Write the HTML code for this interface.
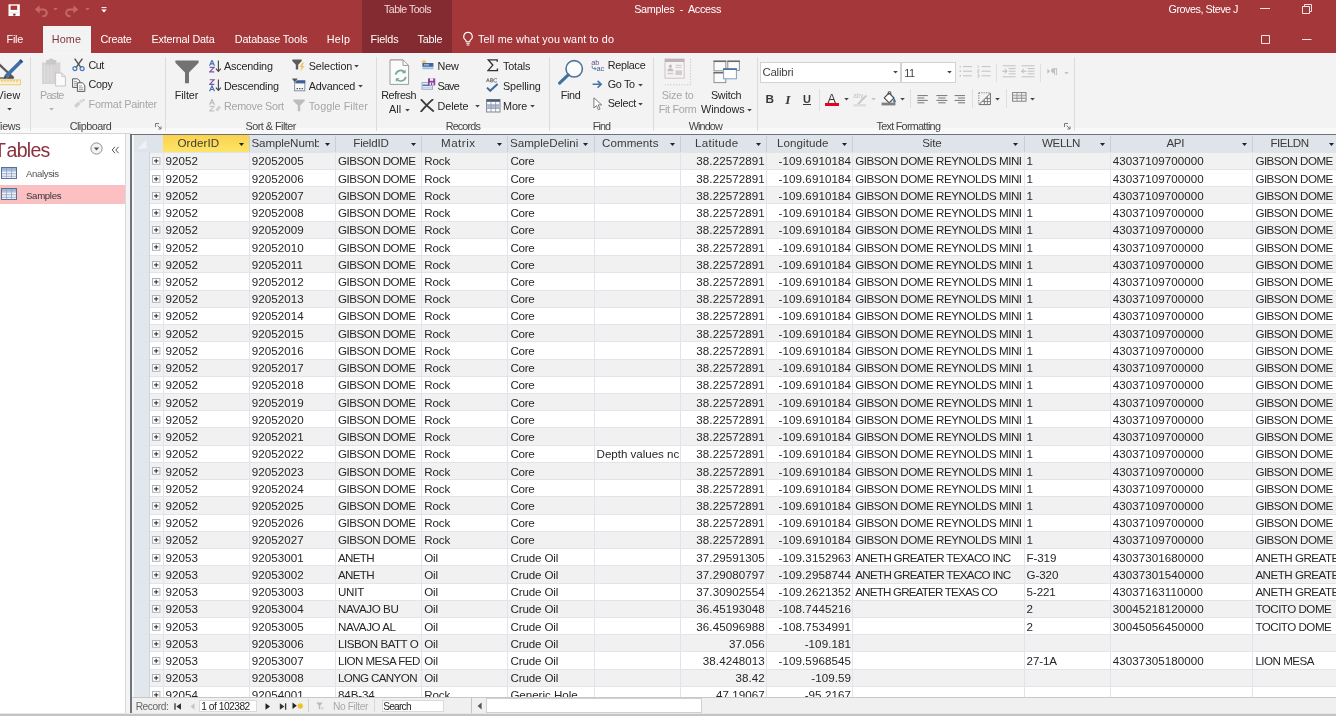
<!DOCTYPE html>
<html lang="en"><head><meta charset="utf-8"><title>Samples - Access</title>
<style>
html,body{margin:0;padding:0;}
body{width:1336px;height:716px;overflow:hidden;position:relative;background:#fff;font-family:"Liberation Sans", sans-serif;}
#app{position:absolute;left:0;top:0;width:1336px;height:716px;overflow:hidden;will-change:transform;-webkit-font-smoothing:antialiased;}
#app div,#app span,#app svg{position:absolute;display:block;}
#app span{white-space:pre;}
</style></head><body><div id="app">
<div style="left:0px;top:0px;width:1336px;height:52.7px;background:#a4373a;"></div>
<div style="left:362px;top:0px;width:90px;height:52.7px;background:#832b30;"></div>
<div style="left:0px;top:52.7px;width:1336px;height:81.3px;background:#f3f3f3;"></div>
<div style="left:42.8px;top:25.9px;width:48.1px;height:28px;background:#f3f3f3;"></div>
<div style="left:0px;top:52.7px;width:1336px;height:0.9px;background:#fbf4f4;"></div>
<div style="left:0px;top:128.4px;width:1336px;height:5.2px;background:#f9f9f9;"></div>
<span style="left:384.00px;top:3.70px;font-size:10.6px;line-height:10.6px;color:#f0d6d7;letter-spacing:-0.519px;">Table Tools</span>
<span style="left:634.20px;top:3.60px;font-size:10.8px;line-height:10.8px;color:#ffffff;letter-spacing:-0.273px;">Samples  -  Access</span>
<span style="left:1168.60px;top:3.60px;font-size:10.8px;line-height:10.8px;color:#ffffff;letter-spacing:-0.494px;">Groves, Steve J</span>
<span style="left:6.60px;top:33.60px;font-size:10.8px;line-height:10.8px;color:#ffffff;letter-spacing:-0.252px;">File</span>
<span style="left:51.80px;top:33.60px;font-size:10.8px;line-height:10.8px;color:#84373d;letter-spacing:0.097px;">Home</span>
<span style="left:100.50px;top:33.60px;font-size:10.8px;line-height:10.8px;color:#ffffff;letter-spacing:-0.254px;">Create</span>
<span style="left:151.40px;top:33.60px;font-size:10.8px;line-height:10.8px;color:#ffffff;letter-spacing:-0.179px;">External Data</span>
<span style="left:234.70px;top:33.60px;font-size:10.8px;line-height:10.8px;color:#ffffff;letter-spacing:-0.102px;">Database Tools</span>
<span style="left:326.70px;top:33.60px;font-size:10.8px;line-height:10.8px;color:#ffffff;letter-spacing:0.345px;">Help</span>
<span style="left:370.50px;top:33.60px;font-size:10.8px;line-height:10.8px;color:#ffffff;letter-spacing:-0.152px;">Fields</span>
<span style="left:417.60px;top:33.60px;font-size:10.8px;line-height:10.8px;color:#ffffff;letter-spacing:-0.243px;">Table</span>
<span style="left:478.00px;top:33.60px;font-size:10.8px;line-height:10.8px;color:#ffffff;letter-spacing:0.102px;">Tell me what you want to do</span>
<svg style="left:461px;top:31px;" width="14" height="16" viewBox="0 0 14 16"><path d="M7 1.2a4.3 4.3 0 0 0-2.6 7.7c.5.5.8 1 .8 1.8h3.6c0-.8.3-1.3.8-1.8A4.3 4.3 0 0 0 7 1.2z" fill="none" stroke="#fff" stroke-width="1.1"/><path d="M5.3 12.3h3.4M5.6 14h2.8" stroke="#fff" stroke-width="1.1"/></svg>
<svg style="left:8px;top:4px;" width="13" height="13" viewBox="0 0 13 13"><rect x=".5" y=".3" width="11.3" height="11.7" fill="#fff"/><rect x="2.6" y="1.7" width="6.6" height="4.2" fill="#a4373a"/><rect x="5.2" y="9.6" width="2.3" height="2" fill="#7a2a2d"/><rect x="2.2" y="8.6" width="8" height=".8" fill="#e9cfd0"/></svg>
<svg style="left:34px;top:4px;" width="16" height="13" viewBox="0 0 16 13"><path d="M3 5.4h6.4a3.4 3.4 0 0 1 0 6.8H8.4" fill="none" stroke="#c4666a" stroke-width="2"/><path d="M5.6 1.2v8.4L.8 5.4z" fill="#c4666a"/></svg>
<svg style="left:53px;top:7.6px;" width="5" height="3" viewBox="0 0 5 3"><path d="M.2 0h4.6L2.5 2.4z" fill="#c4666a"/></svg>
<svg style="left:65.4px;top:4px;" width="16" height="13" viewBox="0 0 16 13"><path d="M11 5.4H4.6a3.4 3.4 0 0 0 0 6.8h1" fill="none" stroke="#c4666a" stroke-width="2"/><path d="M8.4 1.2v8.4l4.8-4.2z" fill="#c4666a"/></svg>
<svg style="left:84.8px;top:7.6px;" width="5" height="3" viewBox="0 0 5 3"><path d="M.2 0h4.6L2.5 2.4z" fill="#c4666a"/></svg>
<svg style="left:100.5px;top:6.5px;" width="6" height="6" viewBox="0 0 6 6"><path d="M.5.6h5" stroke="#fff" stroke-width="1"/><path d="M.3 2.6h5.4L3 5.6z" fill="#fff"/></svg>
<svg style="left:1259px;top:4px;" width="12" height="10" viewBox="0 0 12 10"><path d="M1 4.5h10" stroke="#f6e4e4" stroke-width="1"/></svg>
<svg style="left:1301px;top:3px;" width="12" height="12" viewBox="0 0 12 12"><path d="M1.5 3.5h7v7h-7z" fill="none" stroke="#f6e4e4" stroke-width="1"/><path d="M3.5 3.5v-2h7v7h-2" fill="none" stroke="#f6e4e4" stroke-width="1"/></svg>
<svg style="left:1260px;top:34px;" width="12" height="12" viewBox="0 0 12 12"><path d="M1.5 1.5h8v8h-8z" fill="none" stroke="#f6e4e4" stroke-width="1"/></svg>
<svg style="left:1301px;top:34px;" width="12" height="10" viewBox="0 0 12 10"><path d="M1 5.5h9.5" stroke="#f6e4e4" stroke-width="1"/></svg>
<div style="left:29.7px;top:57px;width:1px;height:74px;background:#dcdcdc;"></div>
<div style="left:165.1px;top:57px;width:1px;height:74px;background:#dcdcdc;"></div>
<div style="left:376.0px;top:57px;width:1px;height:74px;background:#dcdcdc;"></div>
<div style="left:549.0px;top:57px;width:1px;height:74px;background:#dcdcdc;"></div>
<div style="left:653.1px;top:57px;width:1px;height:74px;background:#dcdcdc;"></div>
<div style="left:757.0px;top:57px;width:1px;height:74px;background:#dcdcdc;"></div>
<div style="left:1073.6px;top:57px;width:1px;height:74px;background:#dcdcdc;"></div>
<span style="left:-6.60px;top:120.60px;font-size:10.8px;line-height:10.8px;color:#444444;letter-spacing:-0.322px;">Views</span>
<span style="left:69.70px;top:120.60px;font-size:10.8px;line-height:10.8px;color:#444444;letter-spacing:-0.524px;">Clipboard</span>
<span style="left:245.60px;top:120.60px;font-size:10.8px;line-height:10.8px;color:#444444;letter-spacing:-0.523px;">Sort &amp; Filter</span>
<span style="left:445.70px;top:120.60px;font-size:10.8px;line-height:10.8px;color:#444444;letter-spacing:-0.846px;">Records</span>
<span style="left:592.80px;top:120.60px;font-size:10.8px;line-height:10.8px;color:#444444;letter-spacing:-0.929px;">Find</span>
<span style="left:688.70px;top:120.60px;font-size:10.8px;line-height:10.8px;color:#444444;letter-spacing:-0.868px;">Window</span>
<span style="left:876.50px;top:120.60px;font-size:10.8px;line-height:10.8px;color:#444444;letter-spacing:-0.714px;">Text Formatting</span>
<span style="left:-3.40px;top:89.60px;font-size:10.8px;line-height:10.8px;color:#262626;letter-spacing:0.145px;">View</span>
<span style="left:40.00px;top:89.60px;font-size:10.8px;line-height:10.8px;color:#a6a6a6;letter-spacing:-0.822px;">Paste</span>
<span style="left:174.80px;top:89.60px;font-size:10.8px;line-height:10.8px;color:#262626;letter-spacing:-0.100px;">Filter</span>
<span style="left:381.20px;top:89.60px;font-size:10.8px;line-height:10.8px;color:#262626;letter-spacing:-0.416px;">Refresh</span>
<span style="left:388.90px;top:103.60px;font-size:10.8px;line-height:10.8px;color:#262626;letter-spacing:0.133px;">All</span>
<span style="left:560.70px;top:89.60px;font-size:10.8px;line-height:10.8px;color:#262626;letter-spacing:-0.329px;">Find</span>
<span style="left:661.80px;top:89.60px;font-size:10.8px;line-height:10.8px;color:#a6a6a6;letter-spacing:-0.174px;">Size to</span>
<span style="left:658.70px;top:103.60px;font-size:10.8px;line-height:10.8px;color:#a6a6a6;letter-spacing:-0.286px;">Fit Form</span>
<span style="left:710.90px;top:89.60px;font-size:10.8px;line-height:10.8px;color:#262626;letter-spacing:-0.219px;">Switch</span>
<span style="left:701.00px;top:103.60px;font-size:10.8px;line-height:10.8px;color:#262626;letter-spacing:-0.016px;">Windows</span>
<span style="left:88.60px;top:59.60px;font-size:10.8px;line-height:10.8px;color:#262626;letter-spacing:-0.571px;">Cut</span>
<span style="left:88.60px;top:78.60px;font-size:10.8px;line-height:10.8px;color:#262626;letter-spacing:-0.330px;">Copy</span>
<span style="left:88.60px;top:98.60px;font-size:10.8px;line-height:10.8px;color:#a6a6a6;letter-spacing:-0.229px;">Format Painter</span>
<span style="left:223.90px;top:60.60px;font-size:10.8px;line-height:10.8px;color:#262626;letter-spacing:-0.169px;">Ascending</span>
<span style="left:223.90px;top:80.60px;font-size:10.8px;line-height:10.8px;color:#262626;letter-spacing:-0.203px;">Descending</span>
<span style="left:223.90px;top:100.60px;font-size:10.8px;line-height:10.8px;color:#a6a6a6;letter-spacing:-0.283px;">Remove Sort</span>
<span style="left:308.70px;top:60.60px;font-size:10.8px;line-height:10.8px;color:#262626;letter-spacing:-0.102px;">Selection</span>
<span style="left:308.70px;top:80.60px;font-size:10.8px;line-height:10.8px;color:#262626;letter-spacing:-0.204px;">Advanced</span>
<span style="left:308.70px;top:100.60px;font-size:10.8px;line-height:10.8px;color:#a6a6a6;letter-spacing:0.022px;">Toggle Filter</span>
<span style="left:437.50px;top:60.60px;font-size:10.8px;line-height:10.8px;color:#262626;letter-spacing:-0.170px;">New</span>
<span style="left:437.50px;top:80.60px;font-size:10.8px;line-height:10.8px;color:#262626;letter-spacing:-0.802px;">Save</span>
<span style="left:437.50px;top:100.60px;font-size:10.8px;line-height:10.8px;color:#262626;letter-spacing:-0.036px;">Delete</span>
<span style="left:503.00px;top:60.60px;font-size:10.8px;line-height:10.8px;color:#262626;letter-spacing:-0.170px;">Totals</span>
<span style="left:503.00px;top:80.60px;font-size:10.8px;line-height:10.8px;color:#262626;letter-spacing:-0.078px;">Spelling</span>
<span style="left:503.00px;top:100.60px;font-size:10.8px;line-height:10.8px;color:#262626;letter-spacing:-0.077px;">More</span>
<span style="left:607.70px;top:59.60px;font-size:10.8px;line-height:10.8px;color:#262626;letter-spacing:-0.275px;">Replace</span>
<span style="left:607.70px;top:78.60px;font-size:10.8px;line-height:10.8px;color:#262626;letter-spacing:-0.305px;">Go To</span>
<span style="left:607.70px;top:97.60px;font-size:10.8px;line-height:10.8px;color:#262626;letter-spacing:-0.286px;">Select</span>
<svg style="left:6.9px;top:108.0px;" width="5" height="3" viewBox="0 0 5 3"><path d="M.2 0h4.6L2.5 2.5z" fill="#444"/></svg>
<svg style="left:49.3px;top:108.0px;" width="5" height="3" viewBox="0 0 5 3"><path d="M.2 0h4.6L2.5 2.5z" fill="#b0b0b0"/></svg>
<svg style="left:354.3px;top:65.2px;" width="5" height="3" viewBox="0 0 5 3"><path d="M.2 0h4.6L2.5 2.5z" fill="#444"/></svg>
<svg style="left:358.1px;top:84.7px;" width="5" height="3" viewBox="0 0 5 3"><path d="M.2 0h4.6L2.5 2.5z" fill="#444"/></svg>
<svg style="left:404.5px;top:108.5px;" width="5" height="3" viewBox="0 0 5 3"><path d="M.2 0h4.6L2.5 2.5z" fill="#444"/></svg>
<svg style="left:475.4px;top:104.7px;" width="5" height="3" viewBox="0 0 5 3"><path d="M.2 0h4.6L2.5 2.5z" fill="#444"/></svg>
<svg style="left:529.7px;top:104.7px;" width="5" height="3" viewBox="0 0 5 3"><path d="M.2 0h4.6L2.5 2.5z" fill="#444"/></svg>
<svg style="left:638.1px;top:83.7px;" width="5" height="3" viewBox="0 0 5 3"><path d="M.2 0h4.6L2.5 2.5z" fill="#444"/></svg>
<svg style="left:638.4px;top:102.7px;" width="5" height="3" viewBox="0 0 5 3"><path d="M.2 0h4.6L2.5 2.5z" fill="#444"/></svg>
<svg style="left:747.1px;top:108.5px;" width="5" height="3" viewBox="0 0 5 3"><path d="M.2 0h4.6L2.5 2.5z" fill="#444"/></svg>
<div style="left:760px;top:62px;width:140.5px;height:20.5px;background:#fff;border:1px solid #d2d2d2;box-sizing:border-box;"></div>
<div style="left:901px;top:62px;width:55px;height:20.5px;background:#fff;border:1px solid #d2d2d2;box-sizing:border-box;"></div>
<span style="left:762.40px;top:67.25px;font-size:11.5px;line-height:11.5px;color:#444;letter-spacing:-0.242px;">Calibri</span>
<span style="left:904.20px;top:67.50px;font-size:11px;line-height:11px;color:#444;letter-spacing:-0.511px;">11</span>
<svg style="left:892.8px;top:71.3px;" width="5" height="3" viewBox="0 0 5 3"><path d="M.2 0h4.6L2.5 2.5z" fill="#444"/></svg>
<svg style="left:947.1px;top:71.3px;" width="5" height="3" viewBox="0 0 5 3"><path d="M.2 0h4.6L2.5 2.5z" fill="#444"/></svg>
<svg style="left:-4px;top:58px;" width="28" height="28" viewBox="0 0 28 28"><path d="M1.4 4.6L17.6 20" fill="none" stroke="#5a5a5a" stroke-width="2.3"/><path d="M13.4 17.2l4.6 3.4h-7z" fill="#4a4a4a"/><path d="M3.4 20h14" stroke="#5a5a5a" stroke-width="1.4"/><path d="M10.2 18L24.6 3.8" stroke="#3f6fa8" stroke-width="3.7"/><path d="M24.4 4L26 2.4" stroke="#2b4a73" stroke-width="3.7"/><path d="M8.9 16.7l2.6 2.6-4 1.6z" fill="#444"/><rect x="0" y="21.9" width="24.4" height="4.8" fill="#fdf3d3" stroke="#ecca75" stroke-width="1"/><path d="M3 22v2.4M6 22v2.4M9 22v2.4M12 22v2.4M15 22v2.4M18 22v2.4M21 22v2.4" stroke="#dcb75a" stroke-width=".9"/></svg>
<svg style="left:41px;top:58px;" width="26" height="30" viewBox="0 0 26 30"><rect x="1" y="4.4" width="18.4" height="21.6" fill="#d6d4d5"/><rect x="5.2" y="2" width="10" height="4.4" fill="#c9c7c8"/><rect x="8.2" y=".6" width="4" height="3" fill="#c9c7c8"/><path d="M3.5 8v16M7 8v16M10.5 8v16" stroke="#dedcdd" stroke-width="1.2"/><path d="M14.6 15h6.2l3.6 3.6v9.4h-9.8z" fill="#fbfbfb" stroke="#c6c6c6" stroke-width="1"/><path d="M20.8 15v3.6h3.6" fill="none" stroke="#c6c6c6" stroke-width="1"/></svg>
<svg style="left:72px;top:58px;" width="13" height="14" viewBox="0 0 13 14"><path d="M2.6.6l6.6 9.2M10.4.6L3.8 9.8" stroke="#505050" stroke-width="1.4" fill="none"/><circle cx="2.9" cy="10.6" r="2" fill="none" stroke="#4a7ab5" stroke-width="1.2"/><circle cx="10.1" cy="10.6" r="2" fill="none" stroke="#4a7ab5" stroke-width="1.2"/></svg>
<svg style="left:72px;top:77.5px;" width="14" height="14" viewBox="0 0 14 14"><path d="M.6.8h5l2.2 2.2v6.4H.6z" fill="#fafafa" stroke="#5a5a5a" stroke-width="1"/><path d="M2 3.6h3M2 5.4h4M2 7.2h4" stroke="#8a8a8a" stroke-width=".8"/><path d="M5.4 4.8h5l2.4 2.4v6.2H5.4z" fill="#fafafa" stroke="#5a5a5a" stroke-width="1"/><path d="M7 8h3M7 9.8h4.2M7 11.6h4.2" stroke="#8a8a8a" stroke-width=".8"/></svg>
<svg style="left:73px;top:97.5px;" width="13" height="11" viewBox="0 0 13 11"><path d="M1 7.6l4.2-4.2 2.4 2.4-4.2 4.2z" fill="#cfcfcf"/><path d="M6 2.8l1.6-1.6 2.4 2.4-1.6 1.6z" fill="#d8d8d8"/><circle cx="10.6" cy="2" r="1.2" fill="#cfcfcf"/></svg>
<svg style="left:155px;top:123px;" width="7" height="7" viewBox="0 0 7 7"><path d="M.5 4V.5H4" fill="none" stroke="#777" stroke-width="1"/><path d="M2.6 2.6l3.2 3.2M6 3.4V6H3.4" fill="none" stroke="#777" stroke-width="1"/></svg>
<svg style="left:1064px;top:123px;" width="7" height="7" viewBox="0 0 7 7"><path d="M.5 4V.5H4" fill="none" stroke="#777" stroke-width="1"/><path d="M2.6 2.6l3.2 3.2M6 3.4V6H3.4" fill="none" stroke="#777" stroke-width="1"/></svg>
<svg style="left:175px;top:59.6px;" width="24" height="24" viewBox="0 0 24 24"><path d="M.4.6h23.2v2.2L14 12.6v10.6h-4V12.6L.4 2.8z" fill="#727272"/></svg>
<svg style="left:208.6px;top:59.6px;" width="13" height="13" viewBox="0 0 13 13"><path d="M.5 5.7L3 0.3l2.5 5.4M1.4 3.9h3.2" fill="none" stroke="#4572b0" stroke-width="1.15"/><path d="M.7 7.300000000000001h4.4L.7 11.9h4.6" fill="none" stroke="#7c57a6" stroke-width="1.15"/><path d="M9.4.4v11M6.9 8.6l2.5 2.8 2.5-2.8" fill="none" stroke="#444" stroke-width="1.1"/></svg>
<svg style="left:208.6px;top:79.4px;" width="13" height="13" viewBox="0 0 13 13"><path d="M.7 0.7h4.4L.7 5.3h4.6" fill="none" stroke="#7c57a6" stroke-width="1.15"/><path d="M.5 12.3L3 6.9l2.5 5.4M1.4 10.5h3.2" fill="none" stroke="#4572b0" stroke-width="1.15"/><path d="M9.4.4v11M6.9 8.6l2.5 2.8 2.5-2.8" fill="none" stroke="#444" stroke-width="1.1"/></svg>
<svg style="left:208.6px;top:99.2px;" width="13" height="13" viewBox="0 0 13 13"><path d="M.5 5.7L3 0.3l2.5 5.4M1.4 3.9h3.2" fill="none" stroke="#bdbdbd" stroke-width="1.15"/><path d="M.7 7.300000000000001h4.4L.7 11.9h4.6" fill="none" stroke="#c4c4c4" stroke-width="1.15"/><path d="M6.4 10.6l3.6-4 2 1.8-3.6 4z" fill="#cfcfcf"/></svg>
<svg style="left:292px;top:58.8px;" width="14" height="13" viewBox="0 0 14 13"><path d="M.3.5h9.4v1.4L6.2 5.8v4.8H3.8V5.8L.3 1.9z" fill="#5c5c5c"/><path d="M10.4 3.6L7.6 8h2l-1.4 4.4L12.6 7h-2.2l1.6-3.4z" fill="#f5c25c"/></svg>
<svg style="left:292px;top:78.4px;" width="14" height="14" viewBox="0 0 14 14"><rect x="2.6" y="2.8" width="10.2" height="10" fill="#f6f8fb" stroke="#8593a8" stroke-width="1"/><rect x="2.2" y="2.4" width="11" height="3" fill="#3d6094"/><path d="M.1.2h5.4v1L3.6 3.4v2.4H2V3.4L.1 1.2z" fill="#555" stroke="#f3f3f3" stroke-width=".5"/><path d="M4.6 10.7h1.3M7.1 10.7h1.3M9.6 10.7h1.3" stroke="#444" stroke-width="1.3"/></svg>
<svg style="left:293px;top:99px;" width="13" height="13" viewBox="0 0 13 13"><path d="M.3.5h11.4v1.6L7.2 6.6v5.6H4.8V6.6L.3 2.1z" fill="#bdbdbd"/></svg>
<svg style="left:388.8px;top:59.2px;" width="22" height="27" viewBox="0 0 22 27"><path d="M1 .8h13l5.6 5.6v19H1z" fill="#fbfbfb" stroke="#9c9c9c" stroke-width="1"/><path d="M1 .8h13" stroke="#c3a3ad" stroke-width="1.2"/><path d="M14 .8v5.6h5.6" fill="none" stroke="#9c9c9c" stroke-width="1"/><path d="M6.6 15.6a5.2 5.2 0 0 1 9-2.4" fill="none" stroke="#74a88f" stroke-width="1.7"/><path d="M16.6 10.4v3.8h-3.8z" fill="#74a88f"/><path d="M16.8 17.8a5.2 5.2 0 0 1-9 2.4" fill="none" stroke="#74a88f" stroke-width="1.7"/><path d="M6.8 23v-3.8h3.8z" fill="#74a88f"/></svg>
<svg style="left:420.8px;top:58.6px;" width="13" height="11" viewBox="0 0 13 11"><path d="M3 .2l.9 1.9 2 .3-1.5 1.4.4 2L3 4.8l-1.8 1 .4-2L.1 2.4l2-.3z" fill="#f3c15f"/><rect x="1.4" y="4" width="11" height="3.8" fill="#3b69a3"/><rect x="1.4" y="8.4" width="11" height="1.8" fill="#9db9df"/><path d="M3 5.9h5" stroke="#dfe9f6" stroke-width=".9"/></svg>
<svg style="left:420.8px;top:77.8px;" width="15" height="12" viewBox="0 0 15 12"><rect x="1" y="4.6" width="10.6" height="6.6" fill="#e8eef7" stroke="#8ea3c4" stroke-width=".9"/><path d="M1.6 7.2h9.4" stroke="#345c94" stroke-width="1.2"/><path d="M1.6 9.4h9.4" stroke="#b7c8e2" stroke-width=".9"/><rect x="7" y=".4" width="7.2" height="7" fill="#8a3f9e"/><rect x="9" y=".4" width="3.2" height="2.4" fill="#f3f3f3"/><rect x="8.6" y="4.6" width="4" height="2.8" fill="#f3f3f3"/><rect x="10" y="5" width="1.2" height="2" fill="#8a3f9e"/></svg>
<svg style="left:420px;top:99.2px;" width="15" height="13" viewBox="0 0 15 13"><path d="M1.4.8c3 3.4 7 7.4 11.8 11.2M12.6.6C8.8 3.8 4.8 8.2 1.2 12.4" fill="none" stroke="#3b3b3b" stroke-width="1.8" stroke-linecap="round"/></svg>
<svg style="left:487.4px;top:59px;" width="12" height="13" viewBox="0 0 12 13"><path d="M10.2 2.8V.8H1.2l4.6 5.3-4.8 5.5h9.4V9.4" fill="none" stroke="#333" stroke-width="1.35" stroke-linejoin="miter"/></svg>
<svg style="left:486.4px;top:78px;" width="13" height="14" viewBox="0 0 13 14"><path d="M.4 4L1.9.5 3.4 4M1 2.8h1.8" fill="none" stroke="#666" stroke-width=".8"/><path d="M4.6.5v3.5h1.5a.9.9 0 0 0 0-1.8H4.6M6 2.2a.85.85 0 0 0 0-1.7H4.6" fill="none" stroke="#666" stroke-width=".8"/><path d="M11 1.1a1.9 1.9 0 1 0 0 2.4" fill="none" stroke="#666" stroke-width=".8"/><path d="M1 9.6l3.2 3.2 7.4-6.8" fill="none" stroke="#3d69a2" stroke-width="2"/></svg>
<svg style="left:485.6px;top:98.8px;" width="15" height="14" viewBox="0 0 15 14"><rect x=".6" y=".6" width="13.4" height="12.4" fill="#fbfbfb" stroke="#7d8794" stroke-width="1"/><rect x=".6" y=".4" width="13.4" height="2.4" fill="#4c5b70"/><rect x="1.2" y="6" width="12.2" height="3.2" fill="#aebfdb"/><path d="M1 5.8h12.6M1 9.4h12.6M5 3v10M9.6 3v10" stroke="#8b95a3" stroke-width=".8"/></svg>
<svg style="left:557px;top:58.6px;" width="28" height="27" viewBox="0 0 28 27"><circle cx="17.2" cy="9.8" r="8.2" fill="#fcfcfc" stroke="#4f759d" stroke-width="1.6"/><path d="M11.2 15.8L2.6 24.2" stroke="#41719c" stroke-width="3.1" stroke-linecap="round"/></svg>
<svg style="left:591px;top:59.4px;" width="15" height="13" viewBox="0 0 15 13"><text x=".2" y="5.6" font-family="Liberation Sans, sans-serif" font-size="7.4" fill="#6b4a8c">ab</text><text x="5.4" y="12.2" font-family="Liberation Sans, sans-serif" font-size="7.4" fill="#4a5f94">ac</text><path d="M1.2 6.8v1.6a1.2 1.2 0 0 0 1.2 1.2h2.4M3.6 8.2l1.4 1.4-1.4 1.4" fill="none" stroke="#4574a8" stroke-width=".9"/></svg>
<svg style="left:592.4px;top:79.8px;" width="11" height="9" viewBox="0 0 11 9"><path d="M.6 4.3h8.4M5.6.9l3.6 3.4-3.6 3.4" fill="none" stroke="#4574a8" stroke-width="1.6"/></svg>
<svg style="left:593.2px;top:96.6px;" width="11" height="14" viewBox="0 0 11 14"><path d="M.9.8v10.2l2.6-2.4 1.9 4.2 1.7-.8-1.9-4.1h3.5z" fill="#fdfdfd" stroke="#6f6f6f" stroke-width=".9" stroke-linejoin="round"/></svg>
<svg style="left:664px;top:58px;" width="28" height="28" viewBox="0 0 28 28"><path d="M26.6 1v25.8H1" fill="none" stroke="#c9c3c7" stroke-width="1" stroke-dasharray="1.2 1.6"/><rect x="1" y="1" width="19.2" height="19.2" fill="#f4f2f3" stroke="#cbc4c8" stroke-width="1"/><rect x="1" y="1" width="19.2" height="3" fill="#bcb1b7"/><circle cx="6.4" cy="8.2" r="1.6" fill="#c5bcc1"/><path d="M3.4 13.2a3 3 0 0 1 6 0z" fill="#c5bcc1"/><path d="M11.6 7.4h6M11.6 9.4h6" stroke="#d7d1d4" stroke-width="1.1"/><rect x="11.4" y="12.4" width="6.6" height="4.6" fill="#d2cbcf"/><path d="M3.4 15.6h6" stroke="#d2cbcf" stroke-width="1.6"/></svg>
<svg style="left:712.6px;top:59.6px;" width="28" height="24" viewBox="0 0 28 24"><rect x="1" y="1.2" width="11.8" height="9.6" fill="#fbfbfb" stroke="#909090" stroke-width="1"/><path d="M.5 1.3h12.8" stroke="#6a6a6a" stroke-width="1.5"/><rect x="14.8" y="1.2" width="11.6" height="9.2" fill="#fbfbfb" stroke="#909090" stroke-width="1"/><path d="M14.3 1.3h12.6" stroke="#6a6a6a" stroke-width="1.5"/><rect x="1" y="12.6" width="11.8" height="10" fill="#fbfbfb" stroke="#909090" stroke-width="1"/><path d="M.5 12.7h12.8" stroke="#6a6a6a" stroke-width="1.5"/><rect x="10.6" y="9" width="12.8" height="9.8" fill="#ffffff" stroke="#7f9fc4" stroke-width="1"/><path d="M10.1 9.1h13.8" stroke="#3f6a99" stroke-width="1.6"/></svg>
<svg style="left:958.6px;top:65.4px;" width="14" height="13" viewBox="0 0 14 13"><path d="M4 1.6h9M4 6.2h9M4 10.8h9" stroke="#c2c2c2" stroke-width="1"/><path d="M.6 1.6h1.4M.6 6.2h1.4M.6 10.8h1.4" stroke="#c2c2c2" stroke-width="1.4"/></svg>
<svg style="left:977px;top:65.4px;" width="14" height="13" viewBox="0 0 14 13"><path d="M4.6 1.6h9M4.6 6.2h9M4.6 10.8h9" stroke="#c2c2c2" stroke-width="1"/><path d="M1.2.2v2.8M.6 4.8h1.4v1.4H.6v1.4h1.4M.6 9.4h1.4v2.8H.6M.8 10.8h1.2" fill="none" stroke="#c2c2c2" stroke-width=".8"/></svg>
<div style="left:995.9px;top:64px;width:1px;height:17.6px;background:#dfdfdf;"></div>
<svg style="left:1002px;top:65.4px;" width="15" height="13" viewBox="0 0 15 13"><path d="M.6.8h13M6.6 3.6h7M6.6 6.2h7M6.6 8.8h7M.6 11.8h13" stroke="#c2c2c2" stroke-width="1"/><path d="M.4 6.2h4.4M2.8 4l2.2 2.2-2.2 2.2" fill="none" stroke="#b5b5b5" stroke-width="1"/></svg>
<svg style="left:1020.6px;top:65.4px;" width="15" height="13" viewBox="0 0 15 13"><path d="M.6.8h13M6.6 3.6h7M6.6 6.2h7M6.6 8.8h7M.6 11.8h13" stroke="#c2c2c2" stroke-width="1"/><path d="M5.2 6.2H.8M2.8 4L.6 6.2l2.2 2.2" fill="none" stroke="#b5b5b5" stroke-width="1"/></svg>
<div style="left:1040px;top:64px;width:1px;height:17.6px;background:#dfdfdf;"></div>
<svg style="left:1047px;top:68.2px;" width="11" height="8" viewBox="0 0 11 8"><path d="M.4.8v5l2.6-2.5z" fill="#bdbdbd"/><path d="M9.6.6v6.6M7.6.6v6.6M10 .6H6.4a2 2 0 0 0 0 4h1.2" fill="none" stroke="#bdbdbd" stroke-width=".9"/><path d="M7.4.8H6.4a1.8 1.8 0 0 0 0 3.6h1z" fill="#bdbdbd"/></svg>
<svg style="left:1064.1px;top:71.5px;" width="5" height="3" viewBox="0 0 5 3"><path d="M.2 0h4.6L2.5 2.5z" fill="#c4c4c4"/></svg>
<span style="left:765.40px;top:94.10px;font-size:11.8px;line-height:11.8px;color:#3a3a3a;font-weight:700;letter-spacing:-1.331px;">B</span>
<span style="left:785.2px;top:93.4px;font-family:'Liberation Serif',serif;font-size:13.4px;line-height:13px;font-style:italic;font-weight:700;color:#3a3a3a;">I</span>
<span style="left:803.00px;top:93.50px;font-size:11px;line-height:11px;color:#3a3a3a;font-weight:700;letter-spacing:0.047px;">U</span>
<div style="left:803px;top:104.4px;width:8px;height:1px;background:#3a3a3a;"></div>
<div style="left:819.3px;top:88.6px;width:1px;height:22px;background:#dfdfdf;"></div>
<span style="left:827.40px;top:92.70px;font-size:12.6px;line-height:12.6px;color:#3a3a3a;letter-spacing:1.794px;">A</span>
<div style="left:825px;top:103px;width:14.4px;height:3.2px;background:#e2071c;"></div>
<svg style="left:843.5px;top:98.10000000000001px;" width="5" height="3" viewBox="0 0 5 3"><path d="M.2 0h4.6L2.5 2.5z" fill="#444"/></svg>
<svg style="left:852.6px;top:92.6px;" width="16" height="14" viewBox="0 0 16 14"><text x=".2" y="5.4" font-family="Liberation Sans, sans-serif" font-size="6.4" fill="#c4c4c4">aby</text><path d="M12.8 1.8L5 9.8l-1.6 2.6 2.8-1.2 7.8-8z" fill="#c9c9c9"/><rect x=".6" y="11.2" width="12.6" height="2.2" fill="#dcdcdc"/></svg>
<svg style="left:871.1px;top:98.10000000000001px;" width="5" height="3" viewBox="0 0 5 3"><path d="M.2 0h4.6L2.5 2.5z" fill="#c4c4c4"/></svg>
<svg style="left:880.8px;top:91.4px;" width="16" height="15" viewBox="0 0 16 15"><path d="M3.2 6.8L8 2l5 5-4.8 4.8z" fill="#fdfdfd" stroke="#4a4a4a" stroke-width="1.1" stroke-linejoin="round"/><path d="M7.2 4V1.8a1.3 1.3 0 0 1 2.6 0V4" fill="none" stroke="#4a4a4a" stroke-width="1"/><path d="M13.2 7.2c1.2 1.6 1.6 2.4 1.6 3.2a1.3 1.3 0 0 1-2.6 0c0-.8.4-1.8 1-3.2z" fill="#3f6fa8"/><rect x=".6" y="11.6" width="13.8" height="2.8" fill="#7f7f7f"/></svg>
<svg style="left:899.5px;top:98.10000000000001px;" width="5" height="3" viewBox="0 0 5 3"><path d="M.2 0h4.6L2.5 2.5z" fill="#444"/></svg>
<div style="left:909.9px;top:88.6px;width:1px;height:19px;background:#dfdfdf;"></div>
<svg style="left:917.4px;top:95px;" width="12" height="9" viewBox="0 0 12 9"><path d="M.4.6h10.4M.4 3h7M.4 5.4h10.4M.4 7.8h7" stroke="#767676" stroke-width="1"/></svg>
<svg style="left:935.6px;top:95px;" width="12" height="9" viewBox="0 0 12 9"><path d="M.4.6h11M2.2 3h7.4M.4 5.4h11M2.2 7.8h7.4" stroke="#767676" stroke-width="1"/></svg>
<svg style="left:954.2px;top:95px;" width="12" height="9" viewBox="0 0 12 9"><path d="M.6.6H11M4 3h7M.6 5.4H11M4 7.8h7" stroke="#767676" stroke-width="1"/></svg>
<div style="left:972px;top:88.6px;width:1px;height:19px;background:#dfdfdf;"></div>
<svg style="left:978.4px;top:91.8px;" width="14" height="14" viewBox="0 0 14 14"><path d="M.8.8h11.8M.8.8v11.8" fill="none" stroke="#777" stroke-width="1" stroke-dasharray="1.2 1.2"/><path d="M12.4 1.2v11.4H1z" fill="#fafafa" stroke="#6c6c6c" stroke-width="1"/><path d="M9.4 4.4v8M6.4 7.4v5M4.2 9.6h8M7.2 6.6h5" stroke="#777" stroke-width=".9"/></svg>
<svg style="left:995.1px;top:98.10000000000001px;" width="5" height="3" viewBox="0 0 5 3"><path d="M.2 0h4.6L2.5 2.5z" fill="#444"/></svg>
<div style="left:1006.2px;top:88.6px;width:1px;height:19px;background:#dfdfdf;"></div>
<svg style="left:1012px;top:92.2px;" width="15" height="10" viewBox="0 0 15 10"><rect x=".6" y=".6" width="13.4" height="8.6" fill="#fafafa" stroke="#808080" stroke-width="1"/><rect x="1.2" y="3.4" width="12.2" height="3" fill="#dcdcdc"/><path d="M.6 3.2h13.4M.6 6.4h13.4M5 .6v8.6M9.6.6v8.6" stroke="#8a8a8a" stroke-width=".8"/></svg>
<svg style="left:1030.3px;top:98.10000000000001px;" width="5" height="3" viewBox="0 0 5 3"><path d="M.2 0h4.6L2.5 2.5z" fill="#444"/></svg>
<div style="left:0px;top:134px;width:125.5px;height:582px;background:#ffffff;"></div>
<div style="left:125.5px;top:134px;width:5px;height:582px;background:#f2f4f6;"></div>
<div style="left:125.2px;top:134px;width:0.9px;height:579px;background:#d6d9dd;"></div>
<div style="left:0px;top:185px;width:124.5px;height:19.3px;background:#fcc0c2;border-top:1px solid #f4c1c4;border-bottom:1px solid #f4c1c4;box-sizing:border-box;"></div>
<span style="left:-6.00px;top:141.25px;font-size:19.5px;line-height:19.5px;color:#8c2f3d;">T</span>
<span style="left:6.60px;top:141.25px;font-size:19.5px;line-height:19.5px;color:#8c2f3d;letter-spacing:-0.725px;">ables</span>
<span style="left:26.00px;top:168.70px;font-size:9.6px;line-height:9.6px;color:#555;letter-spacing:-0.367px;">Analysis</span>
<span style="left:26.00px;top:190.70px;font-size:9.6px;line-height:9.6px;color:#333;letter-spacing:-0.304px;">Samples</span>
<svg style="left:1px;top:166.5px;" width="16" height="12" viewBox="0 0 16 12"><rect x=".5" y=".5" width="15" height="11" fill="#eef3fa" stroke="#5b6f8f"/><rect x="1" y="1" width="14" height="2.5" fill="#9fb6d6"/><path d="M1 4h14M1 6.7h14M1 9.3h14M5.5 1v10.5M10.5 1v10.5" stroke="#8ea3c4" stroke-width=".8"/></svg>
<svg style="left:1px;top:188px;" width="16" height="12" viewBox="0 0 16 12"><rect x=".5" y=".5" width="15" height="11" fill="#eef3fa" stroke="#5b6f8f"/><rect x="1" y="1" width="14" height="2.5" fill="#9fb6d6"/><path d="M1 4h14M1 6.7h14M1 9.3h14M5.5 1v10.5M10.5 1v10.5" stroke="#8ea3c4" stroke-width=".8"/></svg>
<svg style="left:90px;top:142px;" width="13" height="13" viewBox="0 0 13 13"><circle cx="6.5" cy="6.5" r="5.6" fill="#f4f4f4" stroke="#8d8d8d" stroke-width="1"/><path d="M3.8 5.4h5.4L6.5 8.6z" fill="#555"/></svg>
<svg style="left:111px;top:145.5px;" width="9" height="8" viewBox="0 0 9 8"><path d="M4 .8L1.2 4 4 7.2M7.6.8L4.8 4l2.8 3.2" fill="none" stroke="#555" stroke-width="1"/></svg>
<div style="left:0;top:0;width:1336px;height:697px;overflow:hidden;">
<div style="left:130.5px;top:134px;width:1205.5px;height:563px;background:#ffffff;"></div>
<div style="left:132.3px;top:135px;width:1203.7px;height:17.3px;background:#dfe3ea;"></div>
<div style="left:149.5px;top:152.3px;width:1186.5px;height:17.28px;background:#f1f1f1;"></div>
<div style="left:149.5px;top:186.76px;width:1186.5px;height:17.28px;background:#f1f1f1;"></div>
<div style="left:149.5px;top:221.22px;width:1186.5px;height:17.28px;background:#f1f1f1;"></div>
<div style="left:149.5px;top:255.68px;width:1186.5px;height:17.28px;background:#f1f1f1;"></div>
<div style="left:149.5px;top:290.14px;width:1186.5px;height:17.28px;background:#f1f1f1;"></div>
<div style="left:149.5px;top:324.6px;width:1186.5px;height:17.28px;background:#f1f1f1;"></div>
<div style="left:149.5px;top:359.06px;width:1186.5px;height:17.28px;background:#f1f1f1;"></div>
<div style="left:149.5px;top:393.52px;width:1186.5px;height:17.28px;background:#f1f1f1;"></div>
<div style="left:149.5px;top:427.98px;width:1186.5px;height:17.28px;background:#f1f1f1;"></div>
<div style="left:149.5px;top:462.44px;width:1186.5px;height:17.28px;background:#f1f1f1;"></div>
<div style="left:149.5px;top:496.9px;width:1186.5px;height:17.28px;background:#f1f1f1;"></div>
<div style="left:149.5px;top:531.36px;width:1186.5px;height:17.28px;background:#f1f1f1;"></div>
<div style="left:149.5px;top:565.82px;width:1186.5px;height:17.28px;background:#f1f1f1;"></div>
<div style="left:149.5px;top:600.28px;width:1186.5px;height:17.28px;background:#f1f1f1;"></div>
<div style="left:149.5px;top:634.74px;width:1186.5px;height:17.28px;background:#f1f1f1;"></div>
<div style="left:149.5px;top:669.2px;width:1186.5px;height:17.28px;background:#f1f1f1;"></div>
<div style="left:132.3px;top:135px;width:17.2px;height:565px;background:#e2e6ed;"></div>
<div style="left:132.3px;top:135px;width:30.2px;height:17.3px;background:#dfe3ea;"></div>
<div style="left:162.6px;top:135px;width:86.4px;height:17.0px;background:linear-gradient(#fbd24e,#fde468);"></div>
<div style="left:132.3px;top:169.03px;width:1203.7px;height:1px;background:#e1e4ea;"></div>
<div style="left:132.3px;top:186.26px;width:1203.7px;height:1px;background:#e1e4ea;"></div>
<div style="left:132.3px;top:203.49px;width:1203.7px;height:1px;background:#e1e4ea;"></div>
<div style="left:132.3px;top:220.72px;width:1203.7px;height:1px;background:#e1e4ea;"></div>
<div style="left:132.3px;top:237.95px;width:1203.7px;height:1px;background:#e1e4ea;"></div>
<div style="left:132.3px;top:255.18px;width:1203.7px;height:1px;background:#e1e4ea;"></div>
<div style="left:132.3px;top:272.41px;width:1203.7px;height:1px;background:#e1e4ea;"></div>
<div style="left:132.3px;top:289.64px;width:1203.7px;height:1px;background:#e1e4ea;"></div>
<div style="left:132.3px;top:306.87px;width:1203.7px;height:1px;background:#e1e4ea;"></div>
<div style="left:132.3px;top:324.1px;width:1203.7px;height:1px;background:#e1e4ea;"></div>
<div style="left:132.3px;top:341.33px;width:1203.7px;height:1px;background:#e1e4ea;"></div>
<div style="left:132.3px;top:358.56px;width:1203.7px;height:1px;background:#e1e4ea;"></div>
<div style="left:132.3px;top:375.79px;width:1203.7px;height:1px;background:#e1e4ea;"></div>
<div style="left:132.3px;top:393.02px;width:1203.7px;height:1px;background:#e1e4ea;"></div>
<div style="left:132.3px;top:410.25px;width:1203.7px;height:1px;background:#e1e4ea;"></div>
<div style="left:132.3px;top:427.48px;width:1203.7px;height:1px;background:#e1e4ea;"></div>
<div style="left:132.3px;top:444.71px;width:1203.7px;height:1px;background:#e1e4ea;"></div>
<div style="left:132.3px;top:461.94px;width:1203.7px;height:1px;background:#e1e4ea;"></div>
<div style="left:132.3px;top:479.17px;width:1203.7px;height:1px;background:#e1e4ea;"></div>
<div style="left:132.3px;top:496.4px;width:1203.7px;height:1px;background:#e1e4ea;"></div>
<div style="left:132.3px;top:513.63px;width:1203.7px;height:1px;background:#e1e4ea;"></div>
<div style="left:132.3px;top:530.86px;width:1203.7px;height:1px;background:#e1e4ea;"></div>
<div style="left:132.3px;top:548.09px;width:1203.7px;height:1px;background:#e1e4ea;"></div>
<div style="left:132.3px;top:565.32px;width:1203.7px;height:1px;background:#e1e4ea;"></div>
<div style="left:132.3px;top:582.55px;width:1203.7px;height:1px;background:#e1e4ea;"></div>
<div style="left:132.3px;top:599.78px;width:1203.7px;height:1px;background:#e1e4ea;"></div>
<div style="left:132.3px;top:617.01px;width:1203.7px;height:1px;background:#e1e4ea;"></div>
<div style="left:132.3px;top:634.24px;width:1203.7px;height:1px;background:#e1e4ea;"></div>
<div style="left:132.3px;top:651.47px;width:1203.7px;height:1px;background:#e1e4ea;"></div>
<div style="left:132.3px;top:668.7px;width:1203.7px;height:1px;background:#e1e4ea;"></div>
<div style="left:132.3px;top:685.93px;width:1203.7px;height:1px;background:#e1e4ea;"></div>
<div style="left:132.3px;top:703.16px;width:1203.7px;height:1px;background:#e1e4ea;"></div>
<div style="left:149.5px;top:151.70000000000002px;width:1186.5px;height:1px;background:#e1e4ea;"></div>
<div style="left:149px;top:152px;width:1px;height:548px;background:#cfd5df;"></div>
<div style="left:162.5px;top:152px;width:1px;height:548px;background:#e1e4ea;"></div>
<div style="left:248.7px;top:152px;width:1px;height:548px;background:#e1e4ea;"></div>
<div style="left:248.7px;top:136px;width:1px;height:16px;background:#c9cfd9;"></div>
<div style="left:334.9px;top:152px;width:1px;height:548px;background:#e1e4ea;"></div>
<div style="left:334.9px;top:136px;width:1px;height:16px;background:#c9cfd9;"></div>
<div style="left:421.1px;top:152px;width:1px;height:548px;background:#e1e4ea;"></div>
<div style="left:421.1px;top:136px;width:1px;height:16px;background:#c9cfd9;"></div>
<div style="left:507.3px;top:152px;width:1px;height:548px;background:#e1e4ea;"></div>
<div style="left:507.3px;top:136px;width:1px;height:16px;background:#c9cfd9;"></div>
<div style="left:593.5px;top:152px;width:1px;height:548px;background:#e1e4ea;"></div>
<div style="left:593.5px;top:136px;width:1px;height:16px;background:#c9cfd9;"></div>
<div style="left:679.7px;top:152px;width:1px;height:548px;background:#e1e4ea;"></div>
<div style="left:679.7px;top:136px;width:1px;height:16px;background:#c9cfd9;"></div>
<div style="left:765.9px;top:152px;width:1px;height:548px;background:#e1e4ea;"></div>
<div style="left:765.9px;top:136px;width:1px;height:16px;background:#c9cfd9;"></div>
<div style="left:852.1px;top:152px;width:1px;height:548px;background:#e1e4ea;"></div>
<div style="left:852.1px;top:136px;width:1px;height:16px;background:#c9cfd9;"></div>
<div style="left:1023.5px;top:152px;width:1px;height:548px;background:#e1e4ea;"></div>
<div style="left:1023.5px;top:136px;width:1px;height:16px;background:#c9cfd9;"></div>
<div style="left:1109.7px;top:152px;width:1px;height:548px;background:#e1e4ea;"></div>
<div style="left:1109.7px;top:136px;width:1px;height:16px;background:#c9cfd9;"></div>
<div style="left:1252.3px;top:152px;width:1px;height:548px;background:#e1e4ea;"></div>
<div style="left:1252.3px;top:136px;width:1px;height:16px;background:#c9cfd9;"></div>
<span style="left:177.50px;top:137.20px;font-size:11.6px;line-height:11.6px;color:#3b3b3b;letter-spacing:0.081px;">OrderID</span>
<svg style="left:238.6px;top:142.8px;" width="5" height="3" viewBox="0 0 5 3"><path d="M0 0h5L2.5 3z" fill="#222"/></svg>
<span style="left:251.50px;top:137.20px;font-size:11.6px;line-height:11.6px;color:#3b3b3b;letter-spacing:-0.115px;width:67.00px;height:14.6px;overflow:hidden;">SampleNumb</span>
<svg style="left:324.79999999999995px;top:142.8px;" width="5" height="3" viewBox="0 0 5 3"><path d="M0 0h5L2.5 3z" fill="#222"/></svg>
<span style="left:353.30px;top:137.20px;font-size:11.6px;line-height:11.6px;color:#3b3b3b;letter-spacing:-0.191px;">FieldID</span>
<svg style="left:411.0px;top:142.8px;" width="5" height="3" viewBox="0 0 5 3"><path d="M0 0h5L2.5 3z" fill="#222"/></svg>
<span style="left:441.00px;top:137.20px;font-size:11.6px;line-height:11.6px;color:#3b3b3b;letter-spacing:0.490px;">Matrix</span>
<svg style="left:497.2px;top:142.8px;" width="5" height="3" viewBox="0 0 5 3"><path d="M0 0h5L2.5 3z" fill="#222"/></svg>
<span style="left:510.00px;top:137.20px;font-size:11.6px;line-height:11.6px;color:#3b3b3b;letter-spacing:-0.001px;">SampleDelini</span>
<svg style="left:583.4px;top:142.8px;" width="5" height="3" viewBox="0 0 5 3"><path d="M0 0h5L2.5 3z" fill="#222"/></svg>
<span style="left:602.00px;top:137.20px;font-size:11.6px;line-height:11.6px;color:#3b3b3b;letter-spacing:0.055px;">Comments</span>
<svg style="left:669.6px;top:142.8px;" width="5" height="3" viewBox="0 0 5 3"><path d="M0 0h5L2.5 3z" fill="#222"/></svg>
<span style="left:695.00px;top:137.20px;font-size:11.6px;line-height:11.6px;color:#3b3b3b;letter-spacing:0.279px;">Latitude</span>
<svg style="left:755.8px;top:142.8px;" width="5" height="3" viewBox="0 0 5 3"><path d="M0 0h5L2.5 3z" fill="#222"/></svg>
<span style="left:777.00px;top:137.20px;font-size:11.6px;line-height:11.6px;color:#3b3b3b;letter-spacing:0.062px;">Longitude</span>
<svg style="left:842.0px;top:142.8px;" width="5" height="3" viewBox="0 0 5 3"><path d="M0 0h5L2.5 3z" fill="#222"/></svg>
<span style="left:922.20px;top:137.20px;font-size:11.6px;line-height:11.6px;color:#3b3b3b;letter-spacing:-0.171px;">Site</span>
<svg style="left:1013.4px;top:142.8px;" width="5" height="3" viewBox="0 0 5 3"><path d="M0 0h5L2.5 3z" fill="#222"/></svg>
<span style="left:1042.00px;top:137.20px;font-size:11.6px;line-height:11.6px;color:#3b3b3b;letter-spacing:-0.391px;">WELLN</span>
<svg style="left:1099.6000000000001px;top:142.8px;" width="5" height="3" viewBox="0 0 5 3"><path d="M0 0h5L2.5 3z" fill="#222"/></svg>
<span style="left:1166.50px;top:137.20px;font-size:11.6px;line-height:11.6px;color:#3b3b3b;letter-spacing:-0.396px;">API</span>
<svg style="left:1242.2px;top:142.8px;" width="5" height="3" viewBox="0 0 5 3"><path d="M0 0h5L2.5 3z" fill="#222"/></svg>
<span style="left:1270.50px;top:137.20px;font-size:11.6px;line-height:11.6px;color:#3b3b3b;letter-spacing:-0.539px;">FIELDN</span>
<svg style="left:1329.0px;top:142.8px;" width="5" height="3" viewBox="0 0 5 3"><path d="M0 0h5L2.5 3z" fill="#222"/></svg>
<svg style="left:152.2px;top:157px;" width="9" height="8" viewBox="0 0 9 8"><rect x=".5" y=".5" width="7.4" height="6.8" fill="#fff" stroke="#adb2ba" stroke-width="1"/><path d="M2 3.9h4.4M4.2 1.8v4.2" stroke="#222" stroke-width="1"/></svg>
<span style="left:165.60px;top:155.20px;font-size:11.6px;line-height:11.6px;color:#262626;letter-spacing:0.050px;width:82.60px;height:14.6px;overflow:hidden;">92052</span>
<span style="left:251.80px;top:155.20px;font-size:11.6px;line-height:11.6px;color:#262626;letter-spacing:0.050px;width:82.60px;height:14.6px;overflow:hidden;">92052005</span>
<span style="left:338.00px;top:155.20px;font-size:11.6px;line-height:11.6px;color:#262626;letter-spacing:-0.519px;width:82.60px;height:14.6px;overflow:hidden;">GIBSON DOME</span>
<span style="left:424.20px;top:155.20px;font-size:11.6px;line-height:11.6px;color:#262626;letter-spacing:-0.080px;width:82.60px;height:14.6px;overflow:hidden;">Rock</span>
<span style="left:510.40px;top:155.20px;font-size:11.6px;line-height:11.6px;color:#262626;letter-spacing:-0.235px;width:82.60px;height:14.6px;overflow:hidden;">Core</span>
<span style="left:696.30px;top:155.20px;font-size:11.6px;line-height:11.6px;color:#262626;letter-spacing:0.080px;">38.22572891</span>
<span style="left:778.56px;top:155.20px;font-size:11.6px;line-height:11.6px;color:#262626;letter-spacing:0.080px;">-109.6910184</span>
<span style="left:855.20px;top:155.20px;font-size:11.6px;line-height:11.6px;color:#262626;letter-spacing:-0.456px;width:167.80px;height:14.6px;overflow:hidden;">GIBSON DOME REYNOLDS MINI</span>
<span style="left:1026.60px;top:155.20px;font-size:11.6px;line-height:11.6px;color:#262626;letter-spacing:0.050px;width:82.60px;height:14.6px;overflow:hidden;">1</span>
<span style="left:1112.80px;top:155.20px;font-size:11.6px;line-height:11.6px;color:#262626;letter-spacing:0.050px;width:139.00px;height:14.6px;overflow:hidden;">43037109700000</span>
<span style="left:1255.40px;top:155.20px;font-size:11.6px;line-height:11.6px;color:#262626;letter-spacing:-0.519px;width:83.20px;height:14.6px;overflow:hidden;">GIBSON DOME</span>
<svg style="left:152.2px;top:175px;" width="9" height="8" viewBox="0 0 9 8"><rect x=".5" y=".5" width="7.4" height="6.8" fill="#fff" stroke="#adb2ba" stroke-width="1"/><path d="M2 3.9h4.4M4.2 1.8v4.2" stroke="#222" stroke-width="1"/></svg>
<span style="left:165.60px;top:173.20px;font-size:11.6px;line-height:11.6px;color:#262626;letter-spacing:0.050px;width:82.60px;height:14.6px;overflow:hidden;">92052</span>
<span style="left:251.80px;top:173.20px;font-size:11.6px;line-height:11.6px;color:#262626;letter-spacing:0.050px;width:82.60px;height:14.6px;overflow:hidden;">92052006</span>
<span style="left:338.00px;top:173.20px;font-size:11.6px;line-height:11.6px;color:#262626;letter-spacing:-0.519px;width:82.60px;height:14.6px;overflow:hidden;">GIBSON DOME</span>
<span style="left:424.20px;top:173.20px;font-size:11.6px;line-height:11.6px;color:#262626;letter-spacing:-0.080px;width:82.60px;height:14.6px;overflow:hidden;">Rock</span>
<span style="left:510.40px;top:173.20px;font-size:11.6px;line-height:11.6px;color:#262626;letter-spacing:-0.235px;width:82.60px;height:14.6px;overflow:hidden;">Core</span>
<span style="left:696.30px;top:173.20px;font-size:11.6px;line-height:11.6px;color:#262626;letter-spacing:0.080px;">38.22572891</span>
<span style="left:778.56px;top:173.20px;font-size:11.6px;line-height:11.6px;color:#262626;letter-spacing:0.080px;">-109.6910184</span>
<span style="left:855.20px;top:173.20px;font-size:11.6px;line-height:11.6px;color:#262626;letter-spacing:-0.456px;width:167.80px;height:14.6px;overflow:hidden;">GIBSON DOME REYNOLDS MINI</span>
<span style="left:1026.60px;top:173.20px;font-size:11.6px;line-height:11.6px;color:#262626;letter-spacing:0.050px;width:82.60px;height:14.6px;overflow:hidden;">1</span>
<span style="left:1112.80px;top:173.20px;font-size:11.6px;line-height:11.6px;color:#262626;letter-spacing:0.050px;width:139.00px;height:14.6px;overflow:hidden;">43037109700000</span>
<span style="left:1255.40px;top:173.20px;font-size:11.6px;line-height:11.6px;color:#262626;letter-spacing:-0.519px;width:83.20px;height:14.6px;overflow:hidden;">GIBSON DOME</span>
<svg style="left:152.2px;top:192px;" width="9" height="8" viewBox="0 0 9 8"><rect x=".5" y=".5" width="7.4" height="6.8" fill="#fff" stroke="#adb2ba" stroke-width="1"/><path d="M2 3.9h4.4M4.2 1.8v4.2" stroke="#222" stroke-width="1"/></svg>
<span style="left:165.60px;top:190.20px;font-size:11.6px;line-height:11.6px;color:#262626;letter-spacing:0.050px;width:82.60px;height:14.6px;overflow:hidden;">92052</span>
<span style="left:251.80px;top:190.20px;font-size:11.6px;line-height:11.6px;color:#262626;letter-spacing:0.050px;width:82.60px;height:14.6px;overflow:hidden;">92052007</span>
<span style="left:338.00px;top:190.20px;font-size:11.6px;line-height:11.6px;color:#262626;letter-spacing:-0.519px;width:82.60px;height:14.6px;overflow:hidden;">GIBSON DOME</span>
<span style="left:424.20px;top:190.20px;font-size:11.6px;line-height:11.6px;color:#262626;letter-spacing:-0.080px;width:82.60px;height:14.6px;overflow:hidden;">Rock</span>
<span style="left:510.40px;top:190.20px;font-size:11.6px;line-height:11.6px;color:#262626;letter-spacing:-0.235px;width:82.60px;height:14.6px;overflow:hidden;">Core</span>
<span style="left:696.30px;top:190.20px;font-size:11.6px;line-height:11.6px;color:#262626;letter-spacing:0.080px;">38.22572891</span>
<span style="left:778.56px;top:190.20px;font-size:11.6px;line-height:11.6px;color:#262626;letter-spacing:0.080px;">-109.6910184</span>
<span style="left:855.20px;top:190.20px;font-size:11.6px;line-height:11.6px;color:#262626;letter-spacing:-0.456px;width:167.80px;height:14.6px;overflow:hidden;">GIBSON DOME REYNOLDS MINI</span>
<span style="left:1026.60px;top:190.20px;font-size:11.6px;line-height:11.6px;color:#262626;letter-spacing:0.050px;width:82.60px;height:14.6px;overflow:hidden;">1</span>
<span style="left:1112.80px;top:190.20px;font-size:11.6px;line-height:11.6px;color:#262626;letter-spacing:0.050px;width:139.00px;height:14.6px;overflow:hidden;">43037109700000</span>
<span style="left:1255.40px;top:190.20px;font-size:11.6px;line-height:11.6px;color:#262626;letter-spacing:-0.519px;width:83.20px;height:14.6px;overflow:hidden;">GIBSON DOME</span>
<svg style="left:152.2px;top:209px;" width="9" height="8" viewBox="0 0 9 8"><rect x=".5" y=".5" width="7.4" height="6.8" fill="#fff" stroke="#adb2ba" stroke-width="1"/><path d="M2 3.9h4.4M4.2 1.8v4.2" stroke="#222" stroke-width="1"/></svg>
<span style="left:165.60px;top:207.20px;font-size:11.6px;line-height:11.6px;color:#262626;letter-spacing:0.050px;width:82.60px;height:14.6px;overflow:hidden;">92052</span>
<span style="left:251.80px;top:207.20px;font-size:11.6px;line-height:11.6px;color:#262626;letter-spacing:0.050px;width:82.60px;height:14.6px;overflow:hidden;">92052008</span>
<span style="left:338.00px;top:207.20px;font-size:11.6px;line-height:11.6px;color:#262626;letter-spacing:-0.519px;width:82.60px;height:14.6px;overflow:hidden;">GIBSON DOME</span>
<span style="left:424.20px;top:207.20px;font-size:11.6px;line-height:11.6px;color:#262626;letter-spacing:-0.080px;width:82.60px;height:14.6px;overflow:hidden;">Rock</span>
<span style="left:510.40px;top:207.20px;font-size:11.6px;line-height:11.6px;color:#262626;letter-spacing:-0.235px;width:82.60px;height:14.6px;overflow:hidden;">Core</span>
<span style="left:696.30px;top:207.20px;font-size:11.6px;line-height:11.6px;color:#262626;letter-spacing:0.080px;">38.22572891</span>
<span style="left:778.56px;top:207.20px;font-size:11.6px;line-height:11.6px;color:#262626;letter-spacing:0.080px;">-109.6910184</span>
<span style="left:855.20px;top:207.20px;font-size:11.6px;line-height:11.6px;color:#262626;letter-spacing:-0.456px;width:167.80px;height:14.6px;overflow:hidden;">GIBSON DOME REYNOLDS MINI</span>
<span style="left:1026.60px;top:207.20px;font-size:11.6px;line-height:11.6px;color:#262626;letter-spacing:0.050px;width:82.60px;height:14.6px;overflow:hidden;">1</span>
<span style="left:1112.80px;top:207.20px;font-size:11.6px;line-height:11.6px;color:#262626;letter-spacing:0.050px;width:139.00px;height:14.6px;overflow:hidden;">43037109700000</span>
<span style="left:1255.40px;top:207.20px;font-size:11.6px;line-height:11.6px;color:#262626;letter-spacing:-0.519px;width:83.20px;height:14.6px;overflow:hidden;">GIBSON DOME</span>
<svg style="left:152.2px;top:226px;" width="9" height="8" viewBox="0 0 9 8"><rect x=".5" y=".5" width="7.4" height="6.8" fill="#fff" stroke="#adb2ba" stroke-width="1"/><path d="M2 3.9h4.4M4.2 1.8v4.2" stroke="#222" stroke-width="1"/></svg>
<span style="left:165.60px;top:224.20px;font-size:11.6px;line-height:11.6px;color:#262626;letter-spacing:0.050px;width:82.60px;height:14.6px;overflow:hidden;">92052</span>
<span style="left:251.80px;top:224.20px;font-size:11.6px;line-height:11.6px;color:#262626;letter-spacing:0.050px;width:82.60px;height:14.6px;overflow:hidden;">92052009</span>
<span style="left:338.00px;top:224.20px;font-size:11.6px;line-height:11.6px;color:#262626;letter-spacing:-0.519px;width:82.60px;height:14.6px;overflow:hidden;">GIBSON DOME</span>
<span style="left:424.20px;top:224.20px;font-size:11.6px;line-height:11.6px;color:#262626;letter-spacing:-0.080px;width:82.60px;height:14.6px;overflow:hidden;">Rock</span>
<span style="left:510.40px;top:224.20px;font-size:11.6px;line-height:11.6px;color:#262626;letter-spacing:-0.235px;width:82.60px;height:14.6px;overflow:hidden;">Core</span>
<span style="left:696.30px;top:224.20px;font-size:11.6px;line-height:11.6px;color:#262626;letter-spacing:0.080px;">38.22572891</span>
<span style="left:778.56px;top:224.20px;font-size:11.6px;line-height:11.6px;color:#262626;letter-spacing:0.080px;">-109.6910184</span>
<span style="left:855.20px;top:224.20px;font-size:11.6px;line-height:11.6px;color:#262626;letter-spacing:-0.456px;width:167.80px;height:14.6px;overflow:hidden;">GIBSON DOME REYNOLDS MINI</span>
<span style="left:1026.60px;top:224.20px;font-size:11.6px;line-height:11.6px;color:#262626;letter-spacing:0.050px;width:82.60px;height:14.6px;overflow:hidden;">1</span>
<span style="left:1112.80px;top:224.20px;font-size:11.6px;line-height:11.6px;color:#262626;letter-spacing:0.050px;width:139.00px;height:14.6px;overflow:hidden;">43037109700000</span>
<span style="left:1255.40px;top:224.20px;font-size:11.6px;line-height:11.6px;color:#262626;letter-spacing:-0.519px;width:83.20px;height:14.6px;overflow:hidden;">GIBSON DOME</span>
<svg style="left:152.2px;top:243px;" width="9" height="8" viewBox="0 0 9 8"><rect x=".5" y=".5" width="7.4" height="6.8" fill="#fff" stroke="#adb2ba" stroke-width="1"/><path d="M2 3.9h4.4M4.2 1.8v4.2" stroke="#222" stroke-width="1"/></svg>
<span style="left:165.60px;top:242.20px;font-size:11.6px;line-height:11.6px;color:#262626;letter-spacing:0.050px;width:82.60px;height:14.6px;overflow:hidden;">92052</span>
<span style="left:251.80px;top:242.20px;font-size:11.6px;line-height:11.6px;color:#262626;letter-spacing:0.050px;width:82.60px;height:14.6px;overflow:hidden;">92052010</span>
<span style="left:338.00px;top:242.20px;font-size:11.6px;line-height:11.6px;color:#262626;letter-spacing:-0.519px;width:82.60px;height:14.6px;overflow:hidden;">GIBSON DOME</span>
<span style="left:424.20px;top:242.20px;font-size:11.6px;line-height:11.6px;color:#262626;letter-spacing:-0.080px;width:82.60px;height:14.6px;overflow:hidden;">Rock</span>
<span style="left:510.40px;top:242.20px;font-size:11.6px;line-height:11.6px;color:#262626;letter-spacing:-0.235px;width:82.60px;height:14.6px;overflow:hidden;">Core</span>
<span style="left:696.30px;top:242.20px;font-size:11.6px;line-height:11.6px;color:#262626;letter-spacing:0.080px;">38.22572891</span>
<span style="left:778.56px;top:242.20px;font-size:11.6px;line-height:11.6px;color:#262626;letter-spacing:0.080px;">-109.6910184</span>
<span style="left:855.20px;top:242.20px;font-size:11.6px;line-height:11.6px;color:#262626;letter-spacing:-0.456px;width:167.80px;height:14.6px;overflow:hidden;">GIBSON DOME REYNOLDS MINI</span>
<span style="left:1026.60px;top:242.20px;font-size:11.6px;line-height:11.6px;color:#262626;letter-spacing:0.050px;width:82.60px;height:14.6px;overflow:hidden;">1</span>
<span style="left:1112.80px;top:242.20px;font-size:11.6px;line-height:11.6px;color:#262626;letter-spacing:0.050px;width:139.00px;height:14.6px;overflow:hidden;">43037109700000</span>
<span style="left:1255.40px;top:242.20px;font-size:11.6px;line-height:11.6px;color:#262626;letter-spacing:-0.519px;width:83.20px;height:14.6px;overflow:hidden;">GIBSON DOME</span>
<svg style="left:152.2px;top:261px;" width="9" height="8" viewBox="0 0 9 8"><rect x=".5" y=".5" width="7.4" height="6.8" fill="#fff" stroke="#adb2ba" stroke-width="1"/><path d="M2 3.9h4.4M4.2 1.8v4.2" stroke="#222" stroke-width="1"/></svg>
<span style="left:165.60px;top:259.20px;font-size:11.6px;line-height:11.6px;color:#262626;letter-spacing:0.050px;width:82.60px;height:14.6px;overflow:hidden;">92052</span>
<span style="left:251.80px;top:259.20px;font-size:11.6px;line-height:11.6px;color:#262626;letter-spacing:0.050px;width:82.60px;height:14.6px;overflow:hidden;">92052011</span>
<span style="left:338.00px;top:259.20px;font-size:11.6px;line-height:11.6px;color:#262626;letter-spacing:-0.519px;width:82.60px;height:14.6px;overflow:hidden;">GIBSON DOME</span>
<span style="left:424.20px;top:259.20px;font-size:11.6px;line-height:11.6px;color:#262626;letter-spacing:-0.080px;width:82.60px;height:14.6px;overflow:hidden;">Rock</span>
<span style="left:510.40px;top:259.20px;font-size:11.6px;line-height:11.6px;color:#262626;letter-spacing:-0.235px;width:82.60px;height:14.6px;overflow:hidden;">Core</span>
<span style="left:696.30px;top:259.20px;font-size:11.6px;line-height:11.6px;color:#262626;letter-spacing:0.080px;">38.22572891</span>
<span style="left:778.56px;top:259.20px;font-size:11.6px;line-height:11.6px;color:#262626;letter-spacing:0.080px;">-109.6910184</span>
<span style="left:855.20px;top:259.20px;font-size:11.6px;line-height:11.6px;color:#262626;letter-spacing:-0.456px;width:167.80px;height:14.6px;overflow:hidden;">GIBSON DOME REYNOLDS MINI</span>
<span style="left:1026.60px;top:259.20px;font-size:11.6px;line-height:11.6px;color:#262626;letter-spacing:0.050px;width:82.60px;height:14.6px;overflow:hidden;">1</span>
<span style="left:1112.80px;top:259.20px;font-size:11.6px;line-height:11.6px;color:#262626;letter-spacing:0.050px;width:139.00px;height:14.6px;overflow:hidden;">43037109700000</span>
<span style="left:1255.40px;top:259.20px;font-size:11.6px;line-height:11.6px;color:#262626;letter-spacing:-0.519px;width:83.20px;height:14.6px;overflow:hidden;">GIBSON DOME</span>
<svg style="left:152.2px;top:278px;" width="9" height="8" viewBox="0 0 9 8"><rect x=".5" y=".5" width="7.4" height="6.8" fill="#fff" stroke="#adb2ba" stroke-width="1"/><path d="M2 3.9h4.4M4.2 1.8v4.2" stroke="#222" stroke-width="1"/></svg>
<span style="left:165.60px;top:276.20px;font-size:11.6px;line-height:11.6px;color:#262626;letter-spacing:0.050px;width:82.60px;height:14.6px;overflow:hidden;">92052</span>
<span style="left:251.80px;top:276.20px;font-size:11.6px;line-height:11.6px;color:#262626;letter-spacing:0.050px;width:82.60px;height:14.6px;overflow:hidden;">92052012</span>
<span style="left:338.00px;top:276.20px;font-size:11.6px;line-height:11.6px;color:#262626;letter-spacing:-0.519px;width:82.60px;height:14.6px;overflow:hidden;">GIBSON DOME</span>
<span style="left:424.20px;top:276.20px;font-size:11.6px;line-height:11.6px;color:#262626;letter-spacing:-0.080px;width:82.60px;height:14.6px;overflow:hidden;">Rock</span>
<span style="left:510.40px;top:276.20px;font-size:11.6px;line-height:11.6px;color:#262626;letter-spacing:-0.235px;width:82.60px;height:14.6px;overflow:hidden;">Core</span>
<span style="left:696.30px;top:276.20px;font-size:11.6px;line-height:11.6px;color:#262626;letter-spacing:0.080px;">38.22572891</span>
<span style="left:778.56px;top:276.20px;font-size:11.6px;line-height:11.6px;color:#262626;letter-spacing:0.080px;">-109.6910184</span>
<span style="left:855.20px;top:276.20px;font-size:11.6px;line-height:11.6px;color:#262626;letter-spacing:-0.456px;width:167.80px;height:14.6px;overflow:hidden;">GIBSON DOME REYNOLDS MINI</span>
<span style="left:1026.60px;top:276.20px;font-size:11.6px;line-height:11.6px;color:#262626;letter-spacing:0.050px;width:82.60px;height:14.6px;overflow:hidden;">1</span>
<span style="left:1112.80px;top:276.20px;font-size:11.6px;line-height:11.6px;color:#262626;letter-spacing:0.050px;width:139.00px;height:14.6px;overflow:hidden;">43037109700000</span>
<span style="left:1255.40px;top:276.20px;font-size:11.6px;line-height:11.6px;color:#262626;letter-spacing:-0.519px;width:83.20px;height:14.6px;overflow:hidden;">GIBSON DOME</span>
<svg style="left:152.2px;top:295px;" width="9" height="8" viewBox="0 0 9 8"><rect x=".5" y=".5" width="7.4" height="6.8" fill="#fff" stroke="#adb2ba" stroke-width="1"/><path d="M2 3.9h4.4M4.2 1.8v4.2" stroke="#222" stroke-width="1"/></svg>
<span style="left:165.60px;top:293.20px;font-size:11.6px;line-height:11.6px;color:#262626;letter-spacing:0.050px;width:82.60px;height:14.6px;overflow:hidden;">92052</span>
<span style="left:251.80px;top:293.20px;font-size:11.6px;line-height:11.6px;color:#262626;letter-spacing:0.050px;width:82.60px;height:14.6px;overflow:hidden;">92052013</span>
<span style="left:338.00px;top:293.20px;font-size:11.6px;line-height:11.6px;color:#262626;letter-spacing:-0.519px;width:82.60px;height:14.6px;overflow:hidden;">GIBSON DOME</span>
<span style="left:424.20px;top:293.20px;font-size:11.6px;line-height:11.6px;color:#262626;letter-spacing:-0.080px;width:82.60px;height:14.6px;overflow:hidden;">Rock</span>
<span style="left:510.40px;top:293.20px;font-size:11.6px;line-height:11.6px;color:#262626;letter-spacing:-0.235px;width:82.60px;height:14.6px;overflow:hidden;">Core</span>
<span style="left:696.30px;top:293.20px;font-size:11.6px;line-height:11.6px;color:#262626;letter-spacing:0.080px;">38.22572891</span>
<span style="left:778.56px;top:293.20px;font-size:11.6px;line-height:11.6px;color:#262626;letter-spacing:0.080px;">-109.6910184</span>
<span style="left:855.20px;top:293.20px;font-size:11.6px;line-height:11.6px;color:#262626;letter-spacing:-0.456px;width:167.80px;height:14.6px;overflow:hidden;">GIBSON DOME REYNOLDS MINI</span>
<span style="left:1026.60px;top:293.20px;font-size:11.6px;line-height:11.6px;color:#262626;letter-spacing:0.050px;width:82.60px;height:14.6px;overflow:hidden;">1</span>
<span style="left:1112.80px;top:293.20px;font-size:11.6px;line-height:11.6px;color:#262626;letter-spacing:0.050px;width:139.00px;height:14.6px;overflow:hidden;">43037109700000</span>
<span style="left:1255.40px;top:293.20px;font-size:11.6px;line-height:11.6px;color:#262626;letter-spacing:-0.519px;width:83.20px;height:14.6px;overflow:hidden;">GIBSON DOME</span>
<svg style="left:152.2px;top:312px;" width="9" height="8" viewBox="0 0 9 8"><rect x=".5" y=".5" width="7.4" height="6.8" fill="#fff" stroke="#adb2ba" stroke-width="1"/><path d="M2 3.9h4.4M4.2 1.8v4.2" stroke="#222" stroke-width="1"/></svg>
<span style="left:165.60px;top:310.20px;font-size:11.6px;line-height:11.6px;color:#262626;letter-spacing:0.050px;width:82.60px;height:14.6px;overflow:hidden;">92052</span>
<span style="left:251.80px;top:310.20px;font-size:11.6px;line-height:11.6px;color:#262626;letter-spacing:0.050px;width:82.60px;height:14.6px;overflow:hidden;">92052014</span>
<span style="left:338.00px;top:310.20px;font-size:11.6px;line-height:11.6px;color:#262626;letter-spacing:-0.519px;width:82.60px;height:14.6px;overflow:hidden;">GIBSON DOME</span>
<span style="left:424.20px;top:310.20px;font-size:11.6px;line-height:11.6px;color:#262626;letter-spacing:-0.080px;width:82.60px;height:14.6px;overflow:hidden;">Rock</span>
<span style="left:510.40px;top:310.20px;font-size:11.6px;line-height:11.6px;color:#262626;letter-spacing:-0.235px;width:82.60px;height:14.6px;overflow:hidden;">Core</span>
<span style="left:696.30px;top:310.20px;font-size:11.6px;line-height:11.6px;color:#262626;letter-spacing:0.080px;">38.22572891</span>
<span style="left:778.56px;top:310.20px;font-size:11.6px;line-height:11.6px;color:#262626;letter-spacing:0.080px;">-109.6910184</span>
<span style="left:855.20px;top:310.20px;font-size:11.6px;line-height:11.6px;color:#262626;letter-spacing:-0.456px;width:167.80px;height:14.6px;overflow:hidden;">GIBSON DOME REYNOLDS MINI</span>
<span style="left:1026.60px;top:310.20px;font-size:11.6px;line-height:11.6px;color:#262626;letter-spacing:0.050px;width:82.60px;height:14.6px;overflow:hidden;">1</span>
<span style="left:1112.80px;top:310.20px;font-size:11.6px;line-height:11.6px;color:#262626;letter-spacing:0.050px;width:139.00px;height:14.6px;overflow:hidden;">43037109700000</span>
<span style="left:1255.40px;top:310.20px;font-size:11.6px;line-height:11.6px;color:#262626;letter-spacing:-0.519px;width:83.20px;height:14.6px;overflow:hidden;">GIBSON DOME</span>
<svg style="left:152.2px;top:330px;" width="9" height="8" viewBox="0 0 9 8"><rect x=".5" y=".5" width="7.4" height="6.8" fill="#fff" stroke="#adb2ba" stroke-width="1"/><path d="M2 3.9h4.4M4.2 1.8v4.2" stroke="#222" stroke-width="1"/></svg>
<span style="left:165.60px;top:328.20px;font-size:11.6px;line-height:11.6px;color:#262626;letter-spacing:0.050px;width:82.60px;height:14.6px;overflow:hidden;">92052</span>
<span style="left:251.80px;top:328.20px;font-size:11.6px;line-height:11.6px;color:#262626;letter-spacing:0.050px;width:82.60px;height:14.6px;overflow:hidden;">92052015</span>
<span style="left:338.00px;top:328.20px;font-size:11.6px;line-height:11.6px;color:#262626;letter-spacing:-0.519px;width:82.60px;height:14.6px;overflow:hidden;">GIBSON DOME</span>
<span style="left:424.20px;top:328.20px;font-size:11.6px;line-height:11.6px;color:#262626;letter-spacing:-0.080px;width:82.60px;height:14.6px;overflow:hidden;">Rock</span>
<span style="left:510.40px;top:328.20px;font-size:11.6px;line-height:11.6px;color:#262626;letter-spacing:-0.235px;width:82.60px;height:14.6px;overflow:hidden;">Core</span>
<span style="left:696.30px;top:328.20px;font-size:11.6px;line-height:11.6px;color:#262626;letter-spacing:0.080px;">38.22572891</span>
<span style="left:778.56px;top:328.20px;font-size:11.6px;line-height:11.6px;color:#262626;letter-spacing:0.080px;">-109.6910184</span>
<span style="left:855.20px;top:328.20px;font-size:11.6px;line-height:11.6px;color:#262626;letter-spacing:-0.456px;width:167.80px;height:14.6px;overflow:hidden;">GIBSON DOME REYNOLDS MINI</span>
<span style="left:1026.60px;top:328.20px;font-size:11.6px;line-height:11.6px;color:#262626;letter-spacing:0.050px;width:82.60px;height:14.6px;overflow:hidden;">1</span>
<span style="left:1112.80px;top:328.20px;font-size:11.6px;line-height:11.6px;color:#262626;letter-spacing:0.050px;width:139.00px;height:14.6px;overflow:hidden;">43037109700000</span>
<span style="left:1255.40px;top:328.20px;font-size:11.6px;line-height:11.6px;color:#262626;letter-spacing:-0.519px;width:83.20px;height:14.6px;overflow:hidden;">GIBSON DOME</span>
<svg style="left:152.2px;top:347px;" width="9" height="8" viewBox="0 0 9 8"><rect x=".5" y=".5" width="7.4" height="6.8" fill="#fff" stroke="#adb2ba" stroke-width="1"/><path d="M2 3.9h4.4M4.2 1.8v4.2" stroke="#222" stroke-width="1"/></svg>
<span style="left:165.60px;top:345.20px;font-size:11.6px;line-height:11.6px;color:#262626;letter-spacing:0.050px;width:82.60px;height:14.6px;overflow:hidden;">92052</span>
<span style="left:251.80px;top:345.20px;font-size:11.6px;line-height:11.6px;color:#262626;letter-spacing:0.050px;width:82.60px;height:14.6px;overflow:hidden;">92052016</span>
<span style="left:338.00px;top:345.20px;font-size:11.6px;line-height:11.6px;color:#262626;letter-spacing:-0.519px;width:82.60px;height:14.6px;overflow:hidden;">GIBSON DOME</span>
<span style="left:424.20px;top:345.20px;font-size:11.6px;line-height:11.6px;color:#262626;letter-spacing:-0.080px;width:82.60px;height:14.6px;overflow:hidden;">Rock</span>
<span style="left:510.40px;top:345.20px;font-size:11.6px;line-height:11.6px;color:#262626;letter-spacing:-0.235px;width:82.60px;height:14.6px;overflow:hidden;">Core</span>
<span style="left:696.30px;top:345.20px;font-size:11.6px;line-height:11.6px;color:#262626;letter-spacing:0.080px;">38.22572891</span>
<span style="left:778.56px;top:345.20px;font-size:11.6px;line-height:11.6px;color:#262626;letter-spacing:0.080px;">-109.6910184</span>
<span style="left:855.20px;top:345.20px;font-size:11.6px;line-height:11.6px;color:#262626;letter-spacing:-0.456px;width:167.80px;height:14.6px;overflow:hidden;">GIBSON DOME REYNOLDS MINI</span>
<span style="left:1026.60px;top:345.20px;font-size:11.6px;line-height:11.6px;color:#262626;letter-spacing:0.050px;width:82.60px;height:14.6px;overflow:hidden;">1</span>
<span style="left:1112.80px;top:345.20px;font-size:11.6px;line-height:11.6px;color:#262626;letter-spacing:0.050px;width:139.00px;height:14.6px;overflow:hidden;">43037109700000</span>
<span style="left:1255.40px;top:345.20px;font-size:11.6px;line-height:11.6px;color:#262626;letter-spacing:-0.519px;width:83.20px;height:14.6px;overflow:hidden;">GIBSON DOME</span>
<svg style="left:152.2px;top:364px;" width="9" height="8" viewBox="0 0 9 8"><rect x=".5" y=".5" width="7.4" height="6.8" fill="#fff" stroke="#adb2ba" stroke-width="1"/><path d="M2 3.9h4.4M4.2 1.8v4.2" stroke="#222" stroke-width="1"/></svg>
<span style="left:165.60px;top:362.20px;font-size:11.6px;line-height:11.6px;color:#262626;letter-spacing:0.050px;width:82.60px;height:14.6px;overflow:hidden;">92052</span>
<span style="left:251.80px;top:362.20px;font-size:11.6px;line-height:11.6px;color:#262626;letter-spacing:0.050px;width:82.60px;height:14.6px;overflow:hidden;">92052017</span>
<span style="left:338.00px;top:362.20px;font-size:11.6px;line-height:11.6px;color:#262626;letter-spacing:-0.519px;width:82.60px;height:14.6px;overflow:hidden;">GIBSON DOME</span>
<span style="left:424.20px;top:362.20px;font-size:11.6px;line-height:11.6px;color:#262626;letter-spacing:-0.080px;width:82.60px;height:14.6px;overflow:hidden;">Rock</span>
<span style="left:510.40px;top:362.20px;font-size:11.6px;line-height:11.6px;color:#262626;letter-spacing:-0.235px;width:82.60px;height:14.6px;overflow:hidden;">Core</span>
<span style="left:696.30px;top:362.20px;font-size:11.6px;line-height:11.6px;color:#262626;letter-spacing:0.080px;">38.22572891</span>
<span style="left:778.56px;top:362.20px;font-size:11.6px;line-height:11.6px;color:#262626;letter-spacing:0.080px;">-109.6910184</span>
<span style="left:855.20px;top:362.20px;font-size:11.6px;line-height:11.6px;color:#262626;letter-spacing:-0.456px;width:167.80px;height:14.6px;overflow:hidden;">GIBSON DOME REYNOLDS MINI</span>
<span style="left:1026.60px;top:362.20px;font-size:11.6px;line-height:11.6px;color:#262626;letter-spacing:0.050px;width:82.60px;height:14.6px;overflow:hidden;">1</span>
<span style="left:1112.80px;top:362.20px;font-size:11.6px;line-height:11.6px;color:#262626;letter-spacing:0.050px;width:139.00px;height:14.6px;overflow:hidden;">43037109700000</span>
<span style="left:1255.40px;top:362.20px;font-size:11.6px;line-height:11.6px;color:#262626;letter-spacing:-0.519px;width:83.20px;height:14.6px;overflow:hidden;">GIBSON DOME</span>
<svg style="left:152.2px;top:381px;" width="9" height="8" viewBox="0 0 9 8"><rect x=".5" y=".5" width="7.4" height="6.8" fill="#fff" stroke="#adb2ba" stroke-width="1"/><path d="M2 3.9h4.4M4.2 1.8v4.2" stroke="#222" stroke-width="1"/></svg>
<span style="left:165.60px;top:379.20px;font-size:11.6px;line-height:11.6px;color:#262626;letter-spacing:0.050px;width:82.60px;height:14.6px;overflow:hidden;">92052</span>
<span style="left:251.80px;top:379.20px;font-size:11.6px;line-height:11.6px;color:#262626;letter-spacing:0.050px;width:82.60px;height:14.6px;overflow:hidden;">92052018</span>
<span style="left:338.00px;top:379.20px;font-size:11.6px;line-height:11.6px;color:#262626;letter-spacing:-0.519px;width:82.60px;height:14.6px;overflow:hidden;">GIBSON DOME</span>
<span style="left:424.20px;top:379.20px;font-size:11.6px;line-height:11.6px;color:#262626;letter-spacing:-0.080px;width:82.60px;height:14.6px;overflow:hidden;">Rock</span>
<span style="left:510.40px;top:379.20px;font-size:11.6px;line-height:11.6px;color:#262626;letter-spacing:-0.235px;width:82.60px;height:14.6px;overflow:hidden;">Core</span>
<span style="left:696.30px;top:379.20px;font-size:11.6px;line-height:11.6px;color:#262626;letter-spacing:0.080px;">38.22572891</span>
<span style="left:778.56px;top:379.20px;font-size:11.6px;line-height:11.6px;color:#262626;letter-spacing:0.080px;">-109.6910184</span>
<span style="left:855.20px;top:379.20px;font-size:11.6px;line-height:11.6px;color:#262626;letter-spacing:-0.456px;width:167.80px;height:14.6px;overflow:hidden;">GIBSON DOME REYNOLDS MINI</span>
<span style="left:1026.60px;top:379.20px;font-size:11.6px;line-height:11.6px;color:#262626;letter-spacing:0.050px;width:82.60px;height:14.6px;overflow:hidden;">1</span>
<span style="left:1112.80px;top:379.20px;font-size:11.6px;line-height:11.6px;color:#262626;letter-spacing:0.050px;width:139.00px;height:14.6px;overflow:hidden;">43037109700000</span>
<span style="left:1255.40px;top:379.20px;font-size:11.6px;line-height:11.6px;color:#262626;letter-spacing:-0.519px;width:83.20px;height:14.6px;overflow:hidden;">GIBSON DOME</span>
<svg style="left:152.2px;top:399px;" width="9" height="8" viewBox="0 0 9 8"><rect x=".5" y=".5" width="7.4" height="6.8" fill="#fff" stroke="#adb2ba" stroke-width="1"/><path d="M2 3.9h4.4M4.2 1.8v4.2" stroke="#222" stroke-width="1"/></svg>
<span style="left:165.60px;top:397.20px;font-size:11.6px;line-height:11.6px;color:#262626;letter-spacing:0.050px;width:82.60px;height:14.6px;overflow:hidden;">92052</span>
<span style="left:251.80px;top:397.20px;font-size:11.6px;line-height:11.6px;color:#262626;letter-spacing:0.050px;width:82.60px;height:14.6px;overflow:hidden;">92052019</span>
<span style="left:338.00px;top:397.20px;font-size:11.6px;line-height:11.6px;color:#262626;letter-spacing:-0.519px;width:82.60px;height:14.6px;overflow:hidden;">GIBSON DOME</span>
<span style="left:424.20px;top:397.20px;font-size:11.6px;line-height:11.6px;color:#262626;letter-spacing:-0.080px;width:82.60px;height:14.6px;overflow:hidden;">Rock</span>
<span style="left:510.40px;top:397.20px;font-size:11.6px;line-height:11.6px;color:#262626;letter-spacing:-0.235px;width:82.60px;height:14.6px;overflow:hidden;">Core</span>
<span style="left:696.30px;top:397.20px;font-size:11.6px;line-height:11.6px;color:#262626;letter-spacing:0.080px;">38.22572891</span>
<span style="left:778.56px;top:397.20px;font-size:11.6px;line-height:11.6px;color:#262626;letter-spacing:0.080px;">-109.6910184</span>
<span style="left:855.20px;top:397.20px;font-size:11.6px;line-height:11.6px;color:#262626;letter-spacing:-0.456px;width:167.80px;height:14.6px;overflow:hidden;">GIBSON DOME REYNOLDS MINI</span>
<span style="left:1026.60px;top:397.20px;font-size:11.6px;line-height:11.6px;color:#262626;letter-spacing:0.050px;width:82.60px;height:14.6px;overflow:hidden;">1</span>
<span style="left:1112.80px;top:397.20px;font-size:11.6px;line-height:11.6px;color:#262626;letter-spacing:0.050px;width:139.00px;height:14.6px;overflow:hidden;">43037109700000</span>
<span style="left:1255.40px;top:397.20px;font-size:11.6px;line-height:11.6px;color:#262626;letter-spacing:-0.519px;width:83.20px;height:14.6px;overflow:hidden;">GIBSON DOME</span>
<svg style="left:152.2px;top:416px;" width="9" height="8" viewBox="0 0 9 8"><rect x=".5" y=".5" width="7.4" height="6.8" fill="#fff" stroke="#adb2ba" stroke-width="1"/><path d="M2 3.9h4.4M4.2 1.8v4.2" stroke="#222" stroke-width="1"/></svg>
<span style="left:165.60px;top:414.20px;font-size:11.6px;line-height:11.6px;color:#262626;letter-spacing:0.050px;width:82.60px;height:14.6px;overflow:hidden;">92052</span>
<span style="left:251.80px;top:414.20px;font-size:11.6px;line-height:11.6px;color:#262626;letter-spacing:0.050px;width:82.60px;height:14.6px;overflow:hidden;">92052020</span>
<span style="left:338.00px;top:414.20px;font-size:11.6px;line-height:11.6px;color:#262626;letter-spacing:-0.519px;width:82.60px;height:14.6px;overflow:hidden;">GIBSON DOME</span>
<span style="left:424.20px;top:414.20px;font-size:11.6px;line-height:11.6px;color:#262626;letter-spacing:-0.080px;width:82.60px;height:14.6px;overflow:hidden;">Rock</span>
<span style="left:510.40px;top:414.20px;font-size:11.6px;line-height:11.6px;color:#262626;letter-spacing:-0.235px;width:82.60px;height:14.6px;overflow:hidden;">Core</span>
<span style="left:696.30px;top:414.20px;font-size:11.6px;line-height:11.6px;color:#262626;letter-spacing:0.080px;">38.22572891</span>
<span style="left:778.56px;top:414.20px;font-size:11.6px;line-height:11.6px;color:#262626;letter-spacing:0.080px;">-109.6910184</span>
<span style="left:855.20px;top:414.20px;font-size:11.6px;line-height:11.6px;color:#262626;letter-spacing:-0.456px;width:167.80px;height:14.6px;overflow:hidden;">GIBSON DOME REYNOLDS MINI</span>
<span style="left:1026.60px;top:414.20px;font-size:11.6px;line-height:11.6px;color:#262626;letter-spacing:0.050px;width:82.60px;height:14.6px;overflow:hidden;">1</span>
<span style="left:1112.80px;top:414.20px;font-size:11.6px;line-height:11.6px;color:#262626;letter-spacing:0.050px;width:139.00px;height:14.6px;overflow:hidden;">43037109700000</span>
<span style="left:1255.40px;top:414.20px;font-size:11.6px;line-height:11.6px;color:#262626;letter-spacing:-0.519px;width:83.20px;height:14.6px;overflow:hidden;">GIBSON DOME</span>
<svg style="left:152.2px;top:433px;" width="9" height="8" viewBox="0 0 9 8"><rect x=".5" y=".5" width="7.4" height="6.8" fill="#fff" stroke="#adb2ba" stroke-width="1"/><path d="M2 3.9h4.4M4.2 1.8v4.2" stroke="#222" stroke-width="1"/></svg>
<span style="left:165.60px;top:431.20px;font-size:11.6px;line-height:11.6px;color:#262626;letter-spacing:0.050px;width:82.60px;height:14.6px;overflow:hidden;">92052</span>
<span style="left:251.80px;top:431.20px;font-size:11.6px;line-height:11.6px;color:#262626;letter-spacing:0.050px;width:82.60px;height:14.6px;overflow:hidden;">92052021</span>
<span style="left:338.00px;top:431.20px;font-size:11.6px;line-height:11.6px;color:#262626;letter-spacing:-0.519px;width:82.60px;height:14.6px;overflow:hidden;">GIBSON DOME</span>
<span style="left:424.20px;top:431.20px;font-size:11.6px;line-height:11.6px;color:#262626;letter-spacing:-0.080px;width:82.60px;height:14.6px;overflow:hidden;">Rock</span>
<span style="left:510.40px;top:431.20px;font-size:11.6px;line-height:11.6px;color:#262626;letter-spacing:-0.235px;width:82.60px;height:14.6px;overflow:hidden;">Core</span>
<span style="left:696.30px;top:431.20px;font-size:11.6px;line-height:11.6px;color:#262626;letter-spacing:0.080px;">38.22572891</span>
<span style="left:778.56px;top:431.20px;font-size:11.6px;line-height:11.6px;color:#262626;letter-spacing:0.080px;">-109.6910184</span>
<span style="left:855.20px;top:431.20px;font-size:11.6px;line-height:11.6px;color:#262626;letter-spacing:-0.456px;width:167.80px;height:14.6px;overflow:hidden;">GIBSON DOME REYNOLDS MINI</span>
<span style="left:1026.60px;top:431.20px;font-size:11.6px;line-height:11.6px;color:#262626;letter-spacing:0.050px;width:82.60px;height:14.6px;overflow:hidden;">1</span>
<span style="left:1112.80px;top:431.20px;font-size:11.6px;line-height:11.6px;color:#262626;letter-spacing:0.050px;width:139.00px;height:14.6px;overflow:hidden;">43037109700000</span>
<span style="left:1255.40px;top:431.20px;font-size:11.6px;line-height:11.6px;color:#262626;letter-spacing:-0.519px;width:83.20px;height:14.6px;overflow:hidden;">GIBSON DOME</span>
<svg style="left:152.2px;top:450px;" width="9" height="8" viewBox="0 0 9 8"><rect x=".5" y=".5" width="7.4" height="6.8" fill="#fff" stroke="#adb2ba" stroke-width="1"/><path d="M2 3.9h4.4M4.2 1.8v4.2" stroke="#222" stroke-width="1"/></svg>
<span style="left:165.60px;top:448.20px;font-size:11.6px;line-height:11.6px;color:#262626;letter-spacing:0.050px;width:82.60px;height:14.6px;overflow:hidden;">92052</span>
<span style="left:251.80px;top:448.20px;font-size:11.6px;line-height:11.6px;color:#262626;letter-spacing:0.050px;width:82.60px;height:14.6px;overflow:hidden;">92052022</span>
<span style="left:338.00px;top:448.20px;font-size:11.6px;line-height:11.6px;color:#262626;letter-spacing:-0.519px;width:82.60px;height:14.6px;overflow:hidden;">GIBSON DOME</span>
<span style="left:424.20px;top:448.20px;font-size:11.6px;line-height:11.6px;color:#262626;letter-spacing:-0.080px;width:82.60px;height:14.6px;overflow:hidden;">Rock</span>
<span style="left:510.40px;top:448.20px;font-size:11.6px;line-height:11.6px;color:#262626;letter-spacing:-0.235px;width:82.60px;height:14.6px;overflow:hidden;">Core</span>
<span style="left:596.60px;top:448.20px;font-size:11.6px;line-height:11.6px;color:#262626;letter-spacing:-0.036px;width:82.60px;height:14.6px;overflow:hidden;">Depth values nc</span>
<span style="left:696.30px;top:448.20px;font-size:11.6px;line-height:11.6px;color:#262626;letter-spacing:0.080px;">38.22572891</span>
<span style="left:778.56px;top:448.20px;font-size:11.6px;line-height:11.6px;color:#262626;letter-spacing:0.080px;">-109.6910184</span>
<span style="left:855.20px;top:448.20px;font-size:11.6px;line-height:11.6px;color:#262626;letter-spacing:-0.456px;width:167.80px;height:14.6px;overflow:hidden;">GIBSON DOME REYNOLDS MINI</span>
<span style="left:1026.60px;top:448.20px;font-size:11.6px;line-height:11.6px;color:#262626;letter-spacing:0.050px;width:82.60px;height:14.6px;overflow:hidden;">1</span>
<span style="left:1112.80px;top:448.20px;font-size:11.6px;line-height:11.6px;color:#262626;letter-spacing:0.050px;width:139.00px;height:14.6px;overflow:hidden;">43037109700000</span>
<span style="left:1255.40px;top:448.20px;font-size:11.6px;line-height:11.6px;color:#262626;letter-spacing:-0.519px;width:83.20px;height:14.6px;overflow:hidden;">GIBSON DOME</span>
<svg style="left:152.2px;top:467px;" width="9" height="8" viewBox="0 0 9 8"><rect x=".5" y=".5" width="7.4" height="6.8" fill="#fff" stroke="#adb2ba" stroke-width="1"/><path d="M2 3.9h4.4M4.2 1.8v4.2" stroke="#222" stroke-width="1"/></svg>
<span style="left:165.60px;top:466.20px;font-size:11.6px;line-height:11.6px;color:#262626;letter-spacing:0.050px;width:82.60px;height:14.6px;overflow:hidden;">92052</span>
<span style="left:251.80px;top:466.20px;font-size:11.6px;line-height:11.6px;color:#262626;letter-spacing:0.050px;width:82.60px;height:14.6px;overflow:hidden;">92052023</span>
<span style="left:338.00px;top:466.20px;font-size:11.6px;line-height:11.6px;color:#262626;letter-spacing:-0.519px;width:82.60px;height:14.6px;overflow:hidden;">GIBSON DOME</span>
<span style="left:424.20px;top:466.20px;font-size:11.6px;line-height:11.6px;color:#262626;letter-spacing:-0.080px;width:82.60px;height:14.6px;overflow:hidden;">Rock</span>
<span style="left:510.40px;top:466.20px;font-size:11.6px;line-height:11.6px;color:#262626;letter-spacing:-0.235px;width:82.60px;height:14.6px;overflow:hidden;">Core</span>
<span style="left:696.30px;top:466.20px;font-size:11.6px;line-height:11.6px;color:#262626;letter-spacing:0.080px;">38.22572891</span>
<span style="left:778.56px;top:466.20px;font-size:11.6px;line-height:11.6px;color:#262626;letter-spacing:0.080px;">-109.6910184</span>
<span style="left:855.20px;top:466.20px;font-size:11.6px;line-height:11.6px;color:#262626;letter-spacing:-0.456px;width:167.80px;height:14.6px;overflow:hidden;">GIBSON DOME REYNOLDS MINI</span>
<span style="left:1026.60px;top:466.20px;font-size:11.6px;line-height:11.6px;color:#262626;letter-spacing:0.050px;width:82.60px;height:14.6px;overflow:hidden;">1</span>
<span style="left:1112.80px;top:466.20px;font-size:11.6px;line-height:11.6px;color:#262626;letter-spacing:0.050px;width:139.00px;height:14.6px;overflow:hidden;">43037109700000</span>
<span style="left:1255.40px;top:466.20px;font-size:11.6px;line-height:11.6px;color:#262626;letter-spacing:-0.519px;width:83.20px;height:14.6px;overflow:hidden;">GIBSON DOME</span>
<svg style="left:152.2px;top:485px;" width="9" height="8" viewBox="0 0 9 8"><rect x=".5" y=".5" width="7.4" height="6.8" fill="#fff" stroke="#adb2ba" stroke-width="1"/><path d="M2 3.9h4.4M4.2 1.8v4.2" stroke="#222" stroke-width="1"/></svg>
<span style="left:165.60px;top:483.20px;font-size:11.6px;line-height:11.6px;color:#262626;letter-spacing:0.050px;width:82.60px;height:14.6px;overflow:hidden;">92052</span>
<span style="left:251.80px;top:483.20px;font-size:11.6px;line-height:11.6px;color:#262626;letter-spacing:0.050px;width:82.60px;height:14.6px;overflow:hidden;">92052024</span>
<span style="left:338.00px;top:483.20px;font-size:11.6px;line-height:11.6px;color:#262626;letter-spacing:-0.519px;width:82.60px;height:14.6px;overflow:hidden;">GIBSON DOME</span>
<span style="left:424.20px;top:483.20px;font-size:11.6px;line-height:11.6px;color:#262626;letter-spacing:-0.080px;width:82.60px;height:14.6px;overflow:hidden;">Rock</span>
<span style="left:510.40px;top:483.20px;font-size:11.6px;line-height:11.6px;color:#262626;letter-spacing:-0.235px;width:82.60px;height:14.6px;overflow:hidden;">Core</span>
<span style="left:696.30px;top:483.20px;font-size:11.6px;line-height:11.6px;color:#262626;letter-spacing:0.080px;">38.22572891</span>
<span style="left:778.56px;top:483.20px;font-size:11.6px;line-height:11.6px;color:#262626;letter-spacing:0.080px;">-109.6910184</span>
<span style="left:855.20px;top:483.20px;font-size:11.6px;line-height:11.6px;color:#262626;letter-spacing:-0.456px;width:167.80px;height:14.6px;overflow:hidden;">GIBSON DOME REYNOLDS MINI</span>
<span style="left:1026.60px;top:483.20px;font-size:11.6px;line-height:11.6px;color:#262626;letter-spacing:0.050px;width:82.60px;height:14.6px;overflow:hidden;">1</span>
<span style="left:1112.80px;top:483.20px;font-size:11.6px;line-height:11.6px;color:#262626;letter-spacing:0.050px;width:139.00px;height:14.6px;overflow:hidden;">43037109700000</span>
<span style="left:1255.40px;top:483.20px;font-size:11.6px;line-height:11.6px;color:#262626;letter-spacing:-0.519px;width:83.20px;height:14.6px;overflow:hidden;">GIBSON DOME</span>
<svg style="left:152.2px;top:502px;" width="9" height="8" viewBox="0 0 9 8"><rect x=".5" y=".5" width="7.4" height="6.8" fill="#fff" stroke="#adb2ba" stroke-width="1"/><path d="M2 3.9h4.4M4.2 1.8v4.2" stroke="#222" stroke-width="1"/></svg>
<span style="left:165.60px;top:500.20px;font-size:11.6px;line-height:11.6px;color:#262626;letter-spacing:0.050px;width:82.60px;height:14.6px;overflow:hidden;">92052</span>
<span style="left:251.80px;top:500.20px;font-size:11.6px;line-height:11.6px;color:#262626;letter-spacing:0.050px;width:82.60px;height:14.6px;overflow:hidden;">92052025</span>
<span style="left:338.00px;top:500.20px;font-size:11.6px;line-height:11.6px;color:#262626;letter-spacing:-0.519px;width:82.60px;height:14.6px;overflow:hidden;">GIBSON DOME</span>
<span style="left:424.20px;top:500.20px;font-size:11.6px;line-height:11.6px;color:#262626;letter-spacing:-0.080px;width:82.60px;height:14.6px;overflow:hidden;">Rock</span>
<span style="left:510.40px;top:500.20px;font-size:11.6px;line-height:11.6px;color:#262626;letter-spacing:-0.235px;width:82.60px;height:14.6px;overflow:hidden;">Core</span>
<span style="left:696.30px;top:500.20px;font-size:11.6px;line-height:11.6px;color:#262626;letter-spacing:0.080px;">38.22572891</span>
<span style="left:778.56px;top:500.20px;font-size:11.6px;line-height:11.6px;color:#262626;letter-spacing:0.080px;">-109.6910184</span>
<span style="left:855.20px;top:500.20px;font-size:11.6px;line-height:11.6px;color:#262626;letter-spacing:-0.456px;width:167.80px;height:14.6px;overflow:hidden;">GIBSON DOME REYNOLDS MINI</span>
<span style="left:1026.60px;top:500.20px;font-size:11.6px;line-height:11.6px;color:#262626;letter-spacing:0.050px;width:82.60px;height:14.6px;overflow:hidden;">1</span>
<span style="left:1112.80px;top:500.20px;font-size:11.6px;line-height:11.6px;color:#262626;letter-spacing:0.050px;width:139.00px;height:14.6px;overflow:hidden;">43037109700000</span>
<span style="left:1255.40px;top:500.20px;font-size:11.6px;line-height:11.6px;color:#262626;letter-spacing:-0.519px;width:83.20px;height:14.6px;overflow:hidden;">GIBSON DOME</span>
<svg style="left:152.2px;top:519px;" width="9" height="8" viewBox="0 0 9 8"><rect x=".5" y=".5" width="7.4" height="6.8" fill="#fff" stroke="#adb2ba" stroke-width="1"/><path d="M2 3.9h4.4M4.2 1.8v4.2" stroke="#222" stroke-width="1"/></svg>
<span style="left:165.60px;top:517.20px;font-size:11.6px;line-height:11.6px;color:#262626;letter-spacing:0.050px;width:82.60px;height:14.6px;overflow:hidden;">92052</span>
<span style="left:251.80px;top:517.20px;font-size:11.6px;line-height:11.6px;color:#262626;letter-spacing:0.050px;width:82.60px;height:14.6px;overflow:hidden;">92052026</span>
<span style="left:338.00px;top:517.20px;font-size:11.6px;line-height:11.6px;color:#262626;letter-spacing:-0.519px;width:82.60px;height:14.6px;overflow:hidden;">GIBSON DOME</span>
<span style="left:424.20px;top:517.20px;font-size:11.6px;line-height:11.6px;color:#262626;letter-spacing:-0.080px;width:82.60px;height:14.6px;overflow:hidden;">Rock</span>
<span style="left:510.40px;top:517.20px;font-size:11.6px;line-height:11.6px;color:#262626;letter-spacing:-0.235px;width:82.60px;height:14.6px;overflow:hidden;">Core</span>
<span style="left:696.30px;top:517.20px;font-size:11.6px;line-height:11.6px;color:#262626;letter-spacing:0.080px;">38.22572891</span>
<span style="left:778.56px;top:517.20px;font-size:11.6px;line-height:11.6px;color:#262626;letter-spacing:0.080px;">-109.6910184</span>
<span style="left:855.20px;top:517.20px;font-size:11.6px;line-height:11.6px;color:#262626;letter-spacing:-0.456px;width:167.80px;height:14.6px;overflow:hidden;">GIBSON DOME REYNOLDS MINI</span>
<span style="left:1026.60px;top:517.20px;font-size:11.6px;line-height:11.6px;color:#262626;letter-spacing:0.050px;width:82.60px;height:14.6px;overflow:hidden;">1</span>
<span style="left:1112.80px;top:517.20px;font-size:11.6px;line-height:11.6px;color:#262626;letter-spacing:0.050px;width:139.00px;height:14.6px;overflow:hidden;">43037109700000</span>
<span style="left:1255.40px;top:517.20px;font-size:11.6px;line-height:11.6px;color:#262626;letter-spacing:-0.519px;width:83.20px;height:14.6px;overflow:hidden;">GIBSON DOME</span>
<svg style="left:152.2px;top:536px;" width="9" height="8" viewBox="0 0 9 8"><rect x=".5" y=".5" width="7.4" height="6.8" fill="#fff" stroke="#adb2ba" stroke-width="1"/><path d="M2 3.9h4.4M4.2 1.8v4.2" stroke="#222" stroke-width="1"/></svg>
<span style="left:165.60px;top:534.20px;font-size:11.6px;line-height:11.6px;color:#262626;letter-spacing:0.050px;width:82.60px;height:14.6px;overflow:hidden;">92052</span>
<span style="left:251.80px;top:534.20px;font-size:11.6px;line-height:11.6px;color:#262626;letter-spacing:0.050px;width:82.60px;height:14.6px;overflow:hidden;">92052027</span>
<span style="left:338.00px;top:534.20px;font-size:11.6px;line-height:11.6px;color:#262626;letter-spacing:-0.519px;width:82.60px;height:14.6px;overflow:hidden;">GIBSON DOME</span>
<span style="left:424.20px;top:534.20px;font-size:11.6px;line-height:11.6px;color:#262626;letter-spacing:-0.080px;width:82.60px;height:14.6px;overflow:hidden;">Rock</span>
<span style="left:510.40px;top:534.20px;font-size:11.6px;line-height:11.6px;color:#262626;letter-spacing:-0.235px;width:82.60px;height:14.6px;overflow:hidden;">Core</span>
<span style="left:696.30px;top:534.20px;font-size:11.6px;line-height:11.6px;color:#262626;letter-spacing:0.080px;">38.22572891</span>
<span style="left:778.56px;top:534.20px;font-size:11.6px;line-height:11.6px;color:#262626;letter-spacing:0.080px;">-109.6910184</span>
<span style="left:855.20px;top:534.20px;font-size:11.6px;line-height:11.6px;color:#262626;letter-spacing:-0.456px;width:167.80px;height:14.6px;overflow:hidden;">GIBSON DOME REYNOLDS MINI</span>
<span style="left:1026.60px;top:534.20px;font-size:11.6px;line-height:11.6px;color:#262626;letter-spacing:0.050px;width:82.60px;height:14.6px;overflow:hidden;">1</span>
<span style="left:1112.80px;top:534.20px;font-size:11.6px;line-height:11.6px;color:#262626;letter-spacing:0.050px;width:139.00px;height:14.6px;overflow:hidden;">43037109700000</span>
<span style="left:1255.40px;top:534.20px;font-size:11.6px;line-height:11.6px;color:#262626;letter-spacing:-0.519px;width:83.20px;height:14.6px;overflow:hidden;">GIBSON DOME</span>
<svg style="left:152.2px;top:554px;" width="9" height="8" viewBox="0 0 9 8"><rect x=".5" y=".5" width="7.4" height="6.8" fill="#fff" stroke="#adb2ba" stroke-width="1"/><path d="M2 3.9h4.4M4.2 1.8v4.2" stroke="#222" stroke-width="1"/></svg>
<span style="left:165.60px;top:552.20px;font-size:11.6px;line-height:11.6px;color:#262626;letter-spacing:0.050px;width:82.60px;height:14.6px;overflow:hidden;">92053</span>
<span style="left:251.80px;top:552.20px;font-size:11.6px;line-height:11.6px;color:#262626;letter-spacing:0.050px;width:82.60px;height:14.6px;overflow:hidden;">92053001</span>
<span style="left:338.00px;top:552.20px;font-size:11.6px;line-height:11.6px;color:#262626;letter-spacing:-0.659px;width:82.60px;height:14.6px;overflow:hidden;">ANETH</span>
<span style="left:424.20px;top:552.20px;font-size:11.6px;line-height:11.6px;color:#262626;letter-spacing:-0.191px;width:82.60px;height:14.6px;overflow:hidden;">Oil</span>
<span style="left:510.40px;top:552.20px;font-size:11.6px;line-height:11.6px;color:#262626;letter-spacing:-0.119px;width:82.60px;height:14.6px;overflow:hidden;">Crude Oil</span>
<span style="left:696.30px;top:552.20px;font-size:11.6px;line-height:11.6px;color:#262626;letter-spacing:0.080px;">37.29591305</span>
<span style="left:778.56px;top:552.20px;font-size:11.6px;line-height:11.6px;color:#262626;letter-spacing:0.080px;">-109.3152963</span>
<span style="left:855.20px;top:552.20px;font-size:11.6px;line-height:11.6px;color:#262626;letter-spacing:-0.682px;width:167.80px;height:14.6px;overflow:hidden;">ANETH GREATER TEXACO INC</span>
<span style="left:1026.60px;top:552.20px;font-size:11.6px;line-height:11.6px;color:#262626;letter-spacing:-0.120px;width:82.60px;height:14.6px;overflow:hidden;">F-319</span>
<span style="left:1112.80px;top:552.20px;font-size:11.6px;line-height:11.6px;color:#262626;letter-spacing:0.050px;width:139.00px;height:14.6px;overflow:hidden;">43037301680000</span>
<span style="left:1255.40px;top:552.20px;font-size:11.6px;line-height:11.6px;color:#262626;letter-spacing:-0.500px;width:83.20px;height:14.6px;overflow:hidden;">ANETH GREATER</span>
<svg style="left:152.2px;top:571px;" width="9" height="8" viewBox="0 0 9 8"><rect x=".5" y=".5" width="7.4" height="6.8" fill="#fff" stroke="#adb2ba" stroke-width="1"/><path d="M2 3.9h4.4M4.2 1.8v4.2" stroke="#222" stroke-width="1"/></svg>
<span style="left:165.60px;top:569.20px;font-size:11.6px;line-height:11.6px;color:#262626;letter-spacing:0.050px;width:82.60px;height:14.6px;overflow:hidden;">92053</span>
<span style="left:251.80px;top:569.20px;font-size:11.6px;line-height:11.6px;color:#262626;letter-spacing:0.050px;width:82.60px;height:14.6px;overflow:hidden;">92053002</span>
<span style="left:338.00px;top:569.20px;font-size:11.6px;line-height:11.6px;color:#262626;letter-spacing:-0.659px;width:82.60px;height:14.6px;overflow:hidden;">ANETH</span>
<span style="left:424.20px;top:569.20px;font-size:11.6px;line-height:11.6px;color:#262626;letter-spacing:-0.191px;width:82.60px;height:14.6px;overflow:hidden;">Oil</span>
<span style="left:510.40px;top:569.20px;font-size:11.6px;line-height:11.6px;color:#262626;letter-spacing:-0.119px;width:82.60px;height:14.6px;overflow:hidden;">Crude Oil</span>
<span style="left:696.30px;top:569.20px;font-size:11.6px;line-height:11.6px;color:#262626;letter-spacing:0.080px;">37.29080797</span>
<span style="left:778.56px;top:569.20px;font-size:11.6px;line-height:11.6px;color:#262626;letter-spacing:0.080px;">-109.2958744</span>
<span style="left:855.20px;top:569.20px;font-size:11.6px;line-height:11.6px;color:#262626;letter-spacing:-0.682px;width:167.80px;height:14.6px;overflow:hidden;">ANETH GREATER TEXACO INC</span>
<span style="left:1026.60px;top:569.20px;font-size:11.6px;line-height:11.6px;color:#262626;letter-spacing:-0.120px;width:82.60px;height:14.6px;overflow:hidden;">G-320</span>
<span style="left:1112.80px;top:569.20px;font-size:11.6px;line-height:11.6px;color:#262626;letter-spacing:0.050px;width:139.00px;height:14.6px;overflow:hidden;">43037301540000</span>
<span style="left:1255.40px;top:569.20px;font-size:11.6px;line-height:11.6px;color:#262626;letter-spacing:-0.500px;width:83.20px;height:14.6px;overflow:hidden;">ANETH GREATER</span>
<svg style="left:152.2px;top:588px;" width="9" height="8" viewBox="0 0 9 8"><rect x=".5" y=".5" width="7.4" height="6.8" fill="#fff" stroke="#adb2ba" stroke-width="1"/><path d="M2 3.9h4.4M4.2 1.8v4.2" stroke="#222" stroke-width="1"/></svg>
<span style="left:165.60px;top:586.20px;font-size:11.6px;line-height:11.6px;color:#262626;letter-spacing:0.050px;width:82.60px;height:14.6px;overflow:hidden;">92053</span>
<span style="left:251.80px;top:586.20px;font-size:11.6px;line-height:11.6px;color:#262626;letter-spacing:0.050px;width:82.60px;height:14.6px;overflow:hidden;">92053003</span>
<span style="left:338.00px;top:586.20px;font-size:11.6px;line-height:11.6px;color:#262626;letter-spacing:-0.266px;width:82.60px;height:14.6px;overflow:hidden;">UNIT</span>
<span style="left:424.20px;top:586.20px;font-size:11.6px;line-height:11.6px;color:#262626;letter-spacing:-0.191px;width:82.60px;height:14.6px;overflow:hidden;">Oil</span>
<span style="left:510.40px;top:586.20px;font-size:11.6px;line-height:11.6px;color:#262626;letter-spacing:-0.119px;width:82.60px;height:14.6px;overflow:hidden;">Crude Oil</span>
<span style="left:696.30px;top:586.20px;font-size:11.6px;line-height:11.6px;color:#262626;letter-spacing:0.080px;">37.30902554</span>
<span style="left:778.56px;top:586.20px;font-size:11.6px;line-height:11.6px;color:#262626;letter-spacing:0.080px;">-109.2621352</span>
<span style="left:855.20px;top:586.20px;font-size:11.6px;line-height:11.6px;color:#262626;letter-spacing:-0.797px;width:167.80px;height:14.6px;overflow:hidden;">ANETH GREATER TEXAS CO</span>
<span style="left:1026.60px;top:586.20px;font-size:11.6px;line-height:11.6px;color:#262626;letter-spacing:-0.120px;width:82.60px;height:14.6px;overflow:hidden;">5-221</span>
<span style="left:1112.80px;top:586.20px;font-size:11.6px;line-height:11.6px;color:#262626;letter-spacing:0.050px;width:139.00px;height:14.6px;overflow:hidden;">43037163110000</span>
<span style="left:1255.40px;top:586.20px;font-size:11.6px;line-height:11.6px;color:#262626;letter-spacing:-0.500px;width:83.20px;height:14.6px;overflow:hidden;">ANETH GREATER</span>
<svg style="left:152.2px;top:605px;" width="9" height="8" viewBox="0 0 9 8"><rect x=".5" y=".5" width="7.4" height="6.8" fill="#fff" stroke="#adb2ba" stroke-width="1"/><path d="M2 3.9h4.4M4.2 1.8v4.2" stroke="#222" stroke-width="1"/></svg>
<span style="left:165.60px;top:603.20px;font-size:11.6px;line-height:11.6px;color:#262626;letter-spacing:0.050px;width:82.60px;height:14.6px;overflow:hidden;">92053</span>
<span style="left:251.80px;top:603.20px;font-size:11.6px;line-height:11.6px;color:#262626;letter-spacing:0.050px;width:82.60px;height:14.6px;overflow:hidden;">92053004</span>
<span style="left:338.00px;top:603.20px;font-size:11.6px;line-height:11.6px;color:#262626;letter-spacing:-0.400px;width:82.60px;height:14.6px;overflow:hidden;">NAVAJO BU</span>
<span style="left:424.20px;top:603.20px;font-size:11.6px;line-height:11.6px;color:#262626;letter-spacing:-0.191px;width:82.60px;height:14.6px;overflow:hidden;">Oil</span>
<span style="left:510.40px;top:603.20px;font-size:11.6px;line-height:11.6px;color:#262626;letter-spacing:-0.119px;width:82.60px;height:14.6px;overflow:hidden;">Crude Oil</span>
<span style="left:696.30px;top:603.20px;font-size:11.6px;line-height:11.6px;color:#262626;letter-spacing:0.080px;">36.45193048</span>
<span style="left:778.56px;top:603.20px;font-size:11.6px;line-height:11.6px;color:#262626;letter-spacing:0.080px;">-108.7445216</span>
<span style="left:1026.60px;top:603.20px;font-size:11.6px;line-height:11.6px;color:#262626;letter-spacing:0.050px;width:82.60px;height:14.6px;overflow:hidden;">2</span>
<span style="left:1112.80px;top:603.20px;font-size:11.6px;line-height:11.6px;color:#262626;letter-spacing:0.050px;width:139.00px;height:14.6px;overflow:hidden;">30045218120000</span>
<span style="left:1255.40px;top:603.20px;font-size:11.6px;line-height:11.6px;color:#262626;letter-spacing:-0.500px;width:83.20px;height:14.6px;overflow:hidden;">TOCITO DOME</span>
<svg style="left:152.2px;top:623px;" width="9" height="8" viewBox="0 0 9 8"><rect x=".5" y=".5" width="7.4" height="6.8" fill="#fff" stroke="#adb2ba" stroke-width="1"/><path d="M2 3.9h4.4M4.2 1.8v4.2" stroke="#222" stroke-width="1"/></svg>
<span style="left:165.60px;top:621.20px;font-size:11.6px;line-height:11.6px;color:#262626;letter-spacing:0.050px;width:82.60px;height:14.6px;overflow:hidden;">92053</span>
<span style="left:251.80px;top:621.20px;font-size:11.6px;line-height:11.6px;color:#262626;letter-spacing:0.050px;width:82.60px;height:14.6px;overflow:hidden;">92053005</span>
<span style="left:338.00px;top:621.20px;font-size:11.6px;line-height:11.6px;color:#262626;letter-spacing:-0.426px;width:82.60px;height:14.6px;overflow:hidden;">NAVAJO AL</span>
<span style="left:424.20px;top:621.20px;font-size:11.6px;line-height:11.6px;color:#262626;letter-spacing:-0.191px;width:82.60px;height:14.6px;overflow:hidden;">Oil</span>
<span style="left:510.40px;top:621.20px;font-size:11.6px;line-height:11.6px;color:#262626;letter-spacing:-0.119px;width:82.60px;height:14.6px;overflow:hidden;">Crude Oil</span>
<span style="left:696.30px;top:621.20px;font-size:11.6px;line-height:11.6px;color:#262626;letter-spacing:0.080px;">36.45096988</span>
<span style="left:778.56px;top:621.20px;font-size:11.6px;line-height:11.6px;color:#262626;letter-spacing:0.080px;">-108.7534991</span>
<span style="left:1026.60px;top:621.20px;font-size:11.6px;line-height:11.6px;color:#262626;letter-spacing:0.050px;width:82.60px;height:14.6px;overflow:hidden;">2</span>
<span style="left:1112.80px;top:621.20px;font-size:11.6px;line-height:11.6px;color:#262626;letter-spacing:0.050px;width:139.00px;height:14.6px;overflow:hidden;">30045056450000</span>
<span style="left:1255.40px;top:621.20px;font-size:11.6px;line-height:11.6px;color:#262626;letter-spacing:-0.500px;width:83.20px;height:14.6px;overflow:hidden;">TOCITO DOME</span>
<svg style="left:152.2px;top:640px;" width="9" height="8" viewBox="0 0 9 8"><rect x=".5" y=".5" width="7.4" height="6.8" fill="#fff" stroke="#adb2ba" stroke-width="1"/><path d="M2 3.9h4.4M4.2 1.8v4.2" stroke="#222" stroke-width="1"/></svg>
<span style="left:165.60px;top:638.20px;font-size:11.6px;line-height:11.6px;color:#262626;letter-spacing:0.050px;width:82.60px;height:14.6px;overflow:hidden;">92053</span>
<span style="left:251.80px;top:638.20px;font-size:11.6px;line-height:11.6px;color:#262626;letter-spacing:0.050px;width:82.60px;height:14.6px;overflow:hidden;">92053006</span>
<span style="left:338.00px;top:638.20px;font-size:11.6px;line-height:11.6px;color:#262626;letter-spacing:-0.481px;width:82.60px;height:14.6px;overflow:hidden;">LISBON BATT O</span>
<span style="left:424.20px;top:638.20px;font-size:11.6px;line-height:11.6px;color:#262626;letter-spacing:-0.191px;width:82.60px;height:14.6px;overflow:hidden;">Oil</span>
<span style="left:510.40px;top:638.20px;font-size:11.6px;line-height:11.6px;color:#262626;letter-spacing:-0.119px;width:82.60px;height:14.6px;overflow:hidden;">Crude Oil</span>
<span style="left:728.93px;top:638.20px;font-size:11.6px;line-height:11.6px;color:#262626;letter-spacing:0.080px;">37.056</span>
<span style="left:804.66px;top:638.20px;font-size:11.6px;line-height:11.6px;color:#262626;letter-spacing:0.080px;">-109.181</span>
<svg style="left:152.2px;top:657px;" width="9" height="8" viewBox="0 0 9 8"><rect x=".5" y=".5" width="7.4" height="6.8" fill="#fff" stroke="#adb2ba" stroke-width="1"/><path d="M2 3.9h4.4M4.2 1.8v4.2" stroke="#222" stroke-width="1"/></svg>
<span style="left:165.60px;top:655.20px;font-size:11.6px;line-height:11.6px;color:#262626;letter-spacing:0.050px;width:82.60px;height:14.6px;overflow:hidden;">92053</span>
<span style="left:251.80px;top:655.20px;font-size:11.6px;line-height:11.6px;color:#262626;letter-spacing:0.050px;width:82.60px;height:14.6px;overflow:hidden;">92053007</span>
<span style="left:338.00px;top:655.20px;font-size:11.6px;line-height:11.6px;color:#262626;letter-spacing:-0.554px;width:82.60px;height:14.6px;overflow:hidden;">LION MESA FED</span>
<span style="left:424.20px;top:655.20px;font-size:11.6px;line-height:11.6px;color:#262626;letter-spacing:-0.191px;width:82.60px;height:14.6px;overflow:hidden;">Oil</span>
<span style="left:510.40px;top:655.20px;font-size:11.6px;line-height:11.6px;color:#262626;letter-spacing:-0.119px;width:82.60px;height:14.6px;overflow:hidden;">Crude Oil</span>
<span style="left:702.81px;top:655.20px;font-size:11.6px;line-height:11.6px;color:#262626;letter-spacing:0.080px;">38.4248013</span>
<span style="left:778.56px;top:655.20px;font-size:11.6px;line-height:11.6px;color:#262626;letter-spacing:0.080px;">-109.5968545</span>
<span style="left:1026.60px;top:655.20px;font-size:11.6px;line-height:11.6px;color:#262626;letter-spacing:-0.120px;width:82.60px;height:14.6px;overflow:hidden;">27-1A</span>
<span style="left:1112.80px;top:655.20px;font-size:11.6px;line-height:11.6px;color:#262626;letter-spacing:0.050px;width:139.00px;height:14.6px;overflow:hidden;">43037305180000</span>
<span style="left:1255.40px;top:655.20px;font-size:11.6px;line-height:11.6px;color:#262626;letter-spacing:-0.500px;width:83.20px;height:14.6px;overflow:hidden;">LION MESA</span>
<svg style="left:152.2px;top:674px;" width="9" height="8" viewBox="0 0 9 8"><rect x=".5" y=".5" width="7.4" height="6.8" fill="#fff" stroke="#adb2ba" stroke-width="1"/><path d="M2 3.9h4.4M4.2 1.8v4.2" stroke="#222" stroke-width="1"/></svg>
<span style="left:165.60px;top:672.20px;font-size:11.6px;line-height:11.6px;color:#262626;letter-spacing:0.050px;width:82.60px;height:14.6px;overflow:hidden;">92053</span>
<span style="left:251.80px;top:672.20px;font-size:11.6px;line-height:11.6px;color:#262626;letter-spacing:0.050px;width:82.60px;height:14.6px;overflow:hidden;">92053008</span>
<span style="left:338.00px;top:672.20px;font-size:11.6px;line-height:11.6px;color:#262626;letter-spacing:-0.617px;width:82.60px;height:14.6px;overflow:hidden;">LONG CANYON</span>
<span style="left:424.20px;top:672.20px;font-size:11.6px;line-height:11.6px;color:#262626;letter-spacing:-0.191px;width:82.60px;height:14.6px;overflow:hidden;">Oil</span>
<span style="left:510.40px;top:672.20px;font-size:11.6px;line-height:11.6px;color:#262626;letter-spacing:-0.119px;width:82.60px;height:14.6px;overflow:hidden;">Crude Oil</span>
<span style="left:735.46px;top:672.20px;font-size:11.6px;line-height:11.6px;color:#262626;letter-spacing:0.080px;">38.42</span>
<span style="left:811.19px;top:672.20px;font-size:11.6px;line-height:11.6px;color:#262626;letter-spacing:0.080px;">-109.59</span>
<svg style="left:152.2px;top:691px;" width="9" height="8" viewBox="0 0 9 8"><rect x=".5" y=".5" width="7.4" height="6.8" fill="#fff" stroke="#adb2ba" stroke-width="1"/><path d="M2 3.9h4.4M4.2 1.8v4.2" stroke="#222" stroke-width="1"/></svg>
<span style="left:165.60px;top:689.20px;font-size:11.6px;line-height:11.6px;color:#262626;letter-spacing:0.050px;width:82.60px;height:14.6px;overflow:hidden;">92054</span>
<span style="left:251.80px;top:689.20px;font-size:11.6px;line-height:11.6px;color:#262626;letter-spacing:0.050px;width:82.60px;height:14.6px;overflow:hidden;">92054001</span>
<span style="left:338.00px;top:689.20px;font-size:11.6px;line-height:11.6px;color:#262626;letter-spacing:-0.120px;width:82.60px;height:14.6px;overflow:hidden;">84B-34</span>
<span style="left:424.20px;top:689.20px;font-size:11.6px;line-height:11.6px;color:#262626;letter-spacing:-0.080px;width:82.60px;height:14.6px;overflow:hidden;">Rock</span>
<span style="left:510.40px;top:689.20px;font-size:11.6px;line-height:11.6px;color:#262626;letter-spacing:-0.039px;width:82.60px;height:14.6px;overflow:hidden;">Generic Hole</span>
<span style="left:715.88px;top:689.20px;font-size:11.6px;line-height:11.6px;color:#262626;letter-spacing:0.080px;">47.19067</span>
<span style="left:804.66px;top:689.20px;font-size:11.6px;line-height:11.6px;color:#262626;letter-spacing:0.080px;">-95.2167</span>
</div>
<div style="left:132.2px;top:135px;width:1.4px;height:562px;background:#f5f7fa;"></div>
<svg style="left:137px;top:138px;" width="11" height="12" viewBox="0 0 11 12"><path d="M9.6 1.2v9.6H.8z" fill="#eef1f6"/></svg>
<div style="left:130.3px;top:134px;width:1.9px;height:579.4px;background:#70757b;"></div>
<div style="left:130.5px;top:133.6px;width:1205.5px;height:1.3px;background:#6d7279;"></div>
<div style="left:0px;top:133px;width:131px;height:1px;background:#d5d5d5;"></div>
<div style="left:132.2px;top:697px;width:1203.8px;height:16.2px;background:#f0f0f0;"></div>
<div style="left:132.2px;top:696.6px;width:1203.8px;height:1px;background:#c8c8c8;"></div>
<div style="left:0px;top:713.2px;width:1336px;height:1.2px;background:#e6e6e6;"></div>
<div style="left:0px;top:714.3px;width:1336px;height:1.7px;background:#c4c4c4;"></div>
<span style="left:135.70px;top:702.40px;font-size:10.2px;line-height:10.2px;color:#666;letter-spacing:-0.439px;">Record:</span>
<div style="left:199px;top:700px;width:58px;height:12.4px;background:#fff;border:1px solid #dadada;box-sizing:border-box;"></div>
<span style="left:201.30px;top:702.40px;font-size:10.2px;line-height:10.2px;color:#222;letter-spacing:-0.484px;">1 of 102382</span>
<svg style="left:173.5px;top:702.5px;" width="8" height="7" viewBox="0 0 8 7"><path d="M1 .3v6.4" stroke="#333" stroke-width="1.3"/><path d="M7 .3v6.4L2.4 3.5z" fill="#333"/></svg>
<svg style="left:190px;top:702.5px;" width="5" height="7" viewBox="0 0 5 7"><path d="M4.5.3v6.4L.5 3.5z" fill="#c4c4c4"/></svg>
<svg style="left:265px;top:702.5px;" width="6" height="7" viewBox="0 0 6 7"><path d="M.5.3v6.4L5 3.5z" fill="#222"/></svg>
<svg style="left:279px;top:702.5px;" width="8" height="7" viewBox="0 0 8 7"><path d="M.8.3v6.4L5.4 3.5z" fill="#333"/><path d="M6.6.3v6.4" stroke="#333" stroke-width="1.3"/></svg>
<svg style="left:291.5px;top:702px;" width="12" height="8" viewBox="0 0 12 8"><path d="M.5.6v6.4L4.8 3.8z" fill="#222"/><path d="M8.3 1.2v5.6M5.5 4h5.6M6.3 2l4 4M10.3 2l-4 4" stroke="#f2c029" stroke-width="1.5"/></svg>
<div style="left:308px;top:699px;width:1px;height:13px;background:#d0d0d0;"></div>
<svg style="left:316px;top:702px;" width="8" height="8" viewBox="0 0 8 8"><path d="M.3.5h6.4L4.2 3.6v3.6H2.8V3.6z" fill="#bbb"/><path d="M5 5l2.5 2.5M7.5 5L5 7.5" stroke="#c9c9c9" stroke-width=".9"/></svg>
<span style="left:332.90px;top:702.40px;font-size:10.2px;line-height:10.2px;color:#a9a9a9;letter-spacing:-0.367px;">No Filter</span>
<div style="left:374px;top:699px;width:1px;height:13px;background:#d8d8d8;"></div>
<div style="left:381.5px;top:700px;width:62.8px;height:12.4px;background:#fff;border:1px solid #dadada;box-sizing:border-box;"></div>
<span style="left:383.20px;top:702.40px;font-size:10.2px;line-height:10.2px;color:#222;letter-spacing:-0.780px;">Search</span>
<div style="left:470.5px;top:698px;width:1px;height:15px;background:#c4c4c4;"></div>
<div style="left:471.5px;top:697.6px;width:14.5px;height:15.6px;background:#f0f0f0;"></div>
<svg style="left:476.5px;top:702.3px;" width="5" height="8" viewBox="0 0 5 8"><path d="M4.6.4v7.2L.6 4z" fill="#555"/></svg>
<div style="left:486.4px;top:698.2px;width:216px;height:14.6px;background:#ffffff;border:1px solid #d0d0d0;box-sizing:border-box;"></div>
</div></body></html>
